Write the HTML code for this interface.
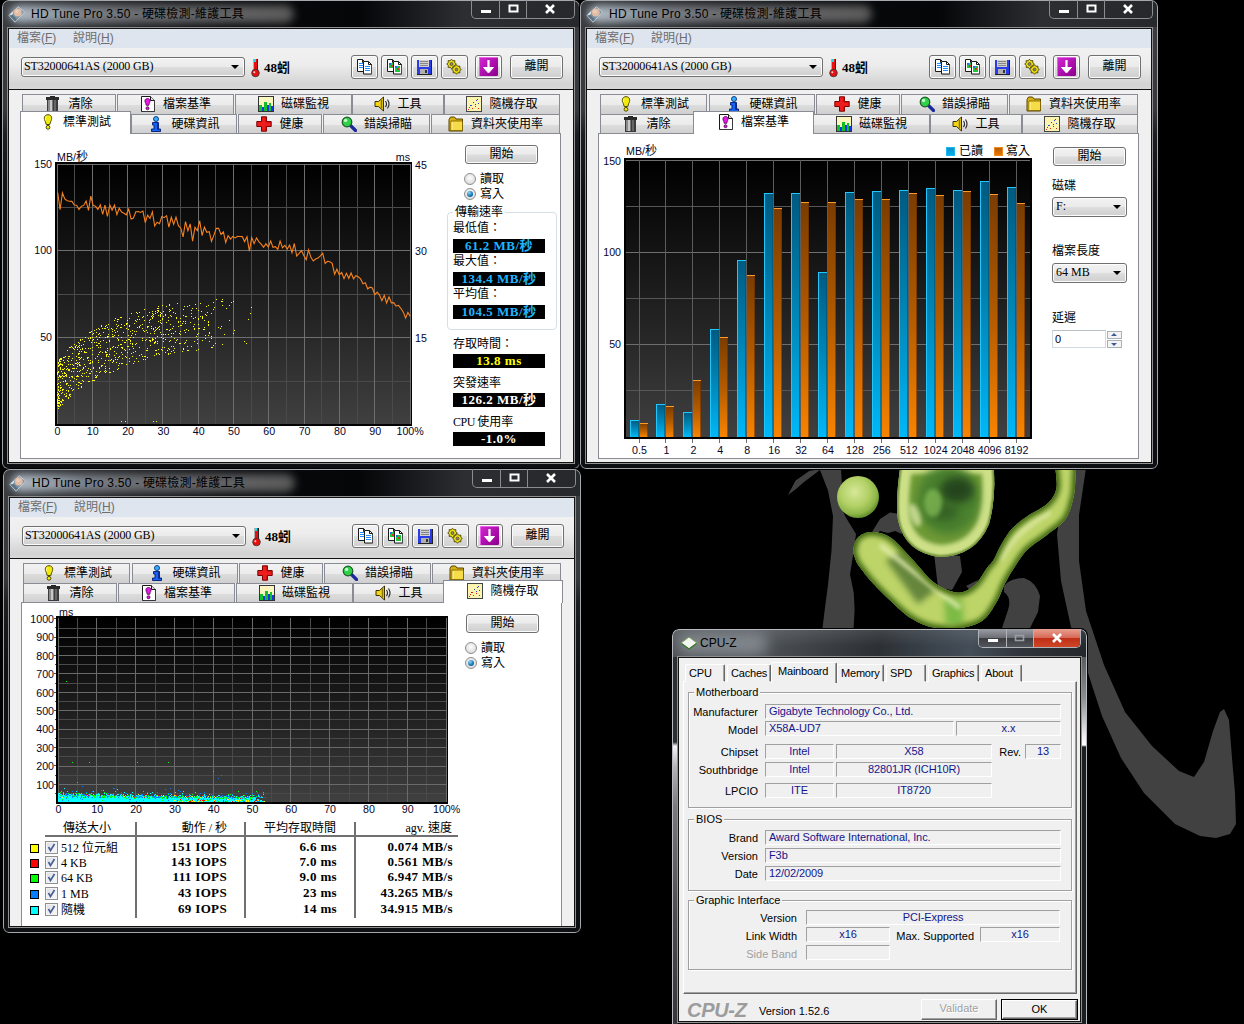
<!DOCTYPE html><html><head><meta charset="utf-8"><title>HD Tune</title><style>
*{box-sizing:border-box;margin:0;padding:0}
html,body{width:1244px;height:1024px;overflow:hidden;background:#000}
body{position:relative;font-family:"Liberation Sans","Noto Sans CJK TC",sans-serif;font-size:12px;color:#000}
.a{position:absolute}
.win{position:absolute;border-radius:7px 7px 6px 6px;background:linear-gradient(#3c3e41 0,#36383b 110px,#1c1d20 135px,#0f1013 200px,#0e0f12 100%);box-shadow:0 0 0 1px #000;overflow:hidden}
.win .edge{position:absolute;left:0;top:0;right:0;bottom:0;border:1px solid #a4a8ac;border-radius:7px 7px 6px 6px}
.tbar{position:absolute;left:1px;right:1px;top:1px;height:26px;background:linear-gradient(90deg,#3a3c40 0,#2a2c2f 8%,#08090b 40%,#050608 62%,#2c2e31 80%,#26282b 100%)}
.glow{position:absolute;left:8px;top:5px;width:284px;height:18px;border-radius:9px;background:linear-gradient(90deg,#b4bec8 0,#a2acb6 10%,#80868e 24%,#6c6e72 45%,#626264 80%,#5a5a5a 100%);filter:blur(4.5px)}
.ttl{position:absolute;left:29px;top:5px;height:18px;line-height:18px;font-size:12px;letter-spacing:.22px;color:#000;white-space:nowrap;font-family:"Liberation Sans","Noto Sans CJK TC",sans-serif}
.cli{position:absolute;left:7px;top:29px;background:#f0f0f0;overflow:hidden}
.cliB{position:absolute;border:1px solid #909090}
.cliB2{position:absolute;border:1px solid #111}
.capb{position:absolute;top:0;height:19px;border:1px solid #8a8c90;border-top:none;border-radius:0 0 5px 5px;overflow:hidden}
.capb i{position:absolute;top:0;bottom:0;width:1px;background:#8a8c90}
.menu{position:absolute;left:0;top:0;right:0;height:19px;background:#dfe5ef;color:#6d6d6d;font-size:12px;line-height:18px;white-space:nowrap}
.menu span{position:absolute;top:0}
.tool{position:absolute;left:0;right:0;top:19px;height:41px;background:linear-gradient(#f1f1f1 0,#ededed 40%,#d3d3d3 90%,#d8d8d8 100%)}
.sep{position:absolute;left:0;right:0;top:60px;height:1px;background:#101010}
.zh{font-family:"Liberation Serif","Noto Sans CJK TC",serif;font-size:12px}
.btn{position:absolute;border:1px solid #707070;border-radius:3px;background:linear-gradient(#f2f2f2 0,#ebebeb 48%,#dddddd 52%,#cfcfcf 100%);box-shadow:inset 0 0 0 1px #fcfcfc;text-align:center;white-space:nowrap}
.combo{position:absolute;border:1px solid #707070;border-radius:3px;background:linear-gradient(#f2f2f2 0,#ebebeb 48%,#dddddd 52%,#cfcfcf 100%);box-shadow:inset 0 0 0 1px #fcfcfc;white-space:nowrap;font-family:"Liberation Serif","Noto Sans CJK TC",serif;font-size:12px}
.combo b{position:absolute;right:5px;top:50%;margin-top:-2px;width:0;height:0;border-left:4px solid transparent;border-right:4px solid transparent;border-top:4px solid #000}
.tab{position:absolute;border:1px solid #898c95;border-bottom:none;background:linear-gradient(#f2f2f2 0,#ebebeb 50%,#dddddd 52%,#cfcfcf 100%);white-space:nowrap;overflow:hidden;display:flex;justify-content:center;align-items:center;padding-bottom:1px}
.tab.sel{background:#fff;z-index:3;padding-bottom:3px}
.tab svg{position:static;flex:none;margin-right:7px}
.tab span{font-family:"Liberation Serif","Noto Sans CJK TC",serif;font-size:12px;line-height:16px}
.page{position:absolute;border:1px solid #898c95;background:#fff}
.lbl{position:absolute;white-space:nowrap;font-family:"Liberation Serif","Noto Sans CJK TC",serif;font-size:12px;line-height:14px}
.val{position:absolute;background:#000;color:#fff;text-align:center;white-space:nowrap;font-family:"Liberation Serif","Noto Sans CJK TC",serif;font-weight:bold;font-size:13px;letter-spacing:.5px;line-height:14px;height:14px;overflow:hidden}
.ax{position:absolute;white-space:nowrap;font-family:"Liberation Sans","Noto Sans CJK TC",sans-serif;font-size:10.67px;line-height:12px;color:#05052a}
.ax b{font-weight:normal;font-size:12px;font-family:"Noto Sans CJK TC",sans-serif}
.radio{position:absolute;width:12px;height:12px;border-radius:50%;border:1px solid #8e8f8f;background:radial-gradient(circle at 50% 40%,#fdfdfd 0,#e3e3e3 60%,#cfcfcf 100%)}
.radio.on:after{content:"";position:absolute;left:2px;top:2px;width:6px;height:6px;border-radius:50%;background:radial-gradient(circle at 35% 30%,#8fd8f8 0,#1c79b8 55%,#0c3f70 100%)}
.chk{position:absolute;width:13px;height:13px;border:1px solid #8e8f8f;background:linear-gradient(135deg,#d8dce2,#f4f4f4 70%);box-shadow:inset 0 0 0 1px #f4f4f4}
.sq{position:absolute;width:9px;height:9px;border:1px solid #000}
/* cpuz */
.cz{font-family:"Liberation Sans",sans-serif;font-size:11px;line-height:13px;white-space:nowrap}
.cz .l{position:absolute;text-align:right;color:#000}
.cz .f{position:absolute;border:1px solid;border-color:#a0a0a0 #fff #fff #a0a0a0;color:#15158c;height:15px;line-height:13px;padding:0 3px;overflow:hidden;letter-spacing:-.1px}
.cz .f.c{text-align:center;padding:0}
.cz .grp{position:absolute;border:1px solid #a0a0a0;box-shadow:1px 1px 0 #fff, inset 1px 1px 0 #fff}
.cz .gl{position:absolute;background:#f0f0f0;padding:0 2px;color:#000}
.cz .ctab{position:absolute;border:1px solid;border-color:#fff #696969 transparent #fff;border-radius:2px 2px 0 0;background:#f0f0f0;box-shadow:inset -1px 0 0 #a0a0a0;padding-left:3px;line-height:17px;color:#000;letter-spacing:-.2px}
.cz .cbtn{position:absolute;border:1px solid;border-color:#fff #696969 #696969 #fff;box-shadow:inset -1px -1px 0 #a0a0a0;background:#f0f0f0;text-align:center;line-height:17px}
</style></head><body><svg class="a" style="left:0;top:0" width="1244" height="1024" viewBox="0 0 1244 1024"><defs>
<radialGradient id="ball" cx=".42" cy=".38" r=".62"><stop offset="0" stop-color="#d6e898"/><stop offset=".55" stop-color="#b2d066"/><stop offset=".85" stop-color="#8eb648"/><stop offset="1" stop-color="#64902e"/></radialGradient>
<filter id="b4" x="-50%" y="-50%" width="200%" height="200%"><feGaussianBlur stdDeviation="4"/></filter>
<filter id="b3" x="-50%" y="-50%" width="200%" height="200%"><feGaussianBlur stdDeviation="3"/></filter>
<filter id="b2" x="-50%" y="-50%" width="200%" height="200%"><feGaussianBlur stdDeviation="2.2"/></filter>
<filter id="b1" x="-50%" y="-50%" width="200%" height="200%"><feGaussianBlur stdDeviation="1"/></filter>
<clipPath id="swc"><path d="M853.3 550.0L853.2 551.2L853.3 552.3L853.4 553.3L853.7 554.2L854.0 555.2L854.3 556.1L854.6 557.0L855.0 558.0L855.3 558.9L855.6 559.8L855.9 560.6L856.2 561.4L856.6 562.3L857.2 563.3L857.9 564.5L858.9 565.9L860.1 567.6L861.6 569.5L863.2 571.6L864.9 573.9L866.8 576.2L868.7 578.5L870.7 580.8L872.6 583.0L874.6 585.1L876.6 587.3L878.8 589.5L880.9 591.6L883.1 593.7L885.3 595.9L887.5 598.0L889.7 600.0L891.8 602.0L894.0 604.1L896.1 606.2L898.3 608.2L900.4 610.1L902.5 612.0L904.7 613.8L906.8 615.4L908.9 616.9L911.1 618.3L913.2 619.6L915.4 620.8L917.5 622.0L919.6 623.0L921.7 623.9L923.8 624.8L925.9 625.6L927.9 626.2L929.9 626.7L931.9 627.2L933.9 627.6L935.9 627.9L938.0 628.2L940.0 628.5L942.0 628.8L943.9 629.0L945.8 629.3L947.7 629.5L949.6 629.6L951.7 629.5L954.0 629.4L956.5 629.0L959.3 628.5L962.5 627.9L965.9 627.1L969.4 626.2L972.8 625.2L976.2 624.0L979.3 622.6L982.0 621.0L984.4 619.1L986.6 617.0L988.6 614.6L990.4 612.0L992.2 609.4L993.7 606.8L995.3 604.2L996.7 601.8L998.0 599.5L999.1 597.2L1000.1 594.9L1001.0 592.7L1001.9 590.5L1002.8 588.3L1003.7 586.1L1004.7 584.0L1005.8 581.9L1006.8 579.9L1007.9 578.0L1009.0 576.0L1010.2 574.1L1011.4 572.1L1012.7 570.1L1014.0 568.0L1015.4 565.8L1016.8 563.6L1018.3 561.3L1019.8 559.0L1021.4 556.7L1023.1 554.4L1025.0 552.1L1027.0 550.0L1029.2 547.9L1031.7 545.9L1034.2 544.0L1036.9 542.1L1039.7 540.2L1042.4 538.3L1045.0 536.4L1047.5 534.5L1049.9 532.6L1052.4 530.7L1054.9 528.9L1057.3 527.1L1059.6 525.2L1061.8 523.2L1063.8 521.2L1065.5 519.0L1067.0 516.7L1068.3 514.1L1069.4 511.5L1070.3 508.9L1071.2 506.2L1071.9 503.5L1072.6 500.9L1073.2 498.4L1073.8 496.0L1074.2 493.7L1074.5 491.5L1074.8 489.3L1075.0 487.1L1075.1 484.9L1075.2 482.7L1075.3 480.4L1075.4 478.0L1075.6 475.4L1075.8 472.7L1075.9 470.1L1075.8 467.6L1075.5 465.3L1075.0 463.4L1074.0 462.0L1072.5 460.9L1070.4 460.1L1067.9 459.5L1065.2 459.2L1062.5 459.3L1060.0 459.7L1058.0 460.6L1056.5 462.0L1055.7 464.1L1055.5 466.9L1055.6 470.3L1056.0 474.0L1056.4 477.9L1056.7 481.6L1056.8 485.1L1056.5 488.0L1055.9 490.5L1055.2 492.7L1054.3 494.7L1053.3 496.6L1052.1 498.4L1050.8 500.1L1049.2 501.9L1047.5 503.6L1045.5 505.3L1043.1 507.0L1040.4 508.6L1037.7 510.2L1034.8 511.7L1032.0 513.3L1029.4 514.8L1027.0 516.4L1024.8 518.0L1022.7 519.6L1020.6 521.1L1018.6 522.7L1016.7 524.3L1014.9 525.9L1013.2 527.6L1011.5 529.3L1009.9 531.1L1008.5 533.0L1007.1 534.9L1005.9 536.9L1004.6 538.8L1003.5 540.8L1002.3 542.8L1001.2 544.7L1000.1 546.7L999.1 548.7L998.1 550.8L997.1 552.8L996.2 554.8L995.3 556.7L994.4 558.4L993.5 560.0L992.7 561.3L991.9 562.3L991.2 563.2L990.5 564.0L989.7 564.7L988.9 565.6L988.0 566.7L987.0 568.0L985.8 569.7L984.6 571.6L983.2 573.8L981.8 576.0L980.3 578.2L978.8 580.4L977.3 582.3L975.8 584.0L974.3 585.4L972.7 586.8L971.1 588.0L969.5 589.1L967.9 590.0L966.3 590.8L964.6 591.5L963.0 592.0L961.4 592.4L959.9 592.6L958.4 592.7L956.8 592.6L955.2 592.4L953.6 592.1L951.9 591.6L950.0 591.0L948.0 590.3L945.9 589.4L943.7 588.4L941.4 587.2L939.0 586.0L936.7 584.5L934.3 582.8L932.0 581.0L929.7 578.9L927.3 576.5L925.0 573.9L922.6 571.1L920.2 568.3L917.8 565.5L915.4 562.7L913.0 560.0L910.5 557.3L907.9 554.5L905.3 551.7L902.7 548.9L900.2 546.2L897.7 543.7L895.4 541.5L893.2 539.6L891.3 538.1L889.5 536.9L887.9 535.9L886.3 535.2L884.8 534.6L883.4 534.1L881.9 533.6L880.3 533.2L878.7 532.8L877.0 532.4L875.4 532.2L873.7 532.0L872.1 532.0L870.5 532.0L869.0 532.1L867.5 532.4L866.0 532.8L864.6 533.3L863.2 533.9L861.8 534.6L860.5 535.4L859.3 536.3L858.2 537.2L857.2 538.3L856.4 539.5L855.6 540.9L855.0 542.4L854.5 544.0L854.1 545.6L853.7 547.2L853.5 548.7Z"/></clipPath>
<clipPath id="blc"><path d="M901 462Q895 500 898 520Q905 553 940 557Q976 556 989 524Q997 495 993 462Z"/></clipPath>
</defs><path d="M819.600 469L828 490.600L833 516L831.500 550.500L828 584.700L824.700 610L821 640L853 640L854.600 610L853.800 593L850 574.400L853.800 550.500L856 534L845 516L838.400 499L841.800 482L841 469Z" fill="#414141"/><path d="M788 495L795.600 480.400L809.300 471L821 469L816 473L804 482L796 489Z" fill="#414141"/><path d="M872 532L880 519L890 512.500L900 514L902 534L895 531L888 533L880 531L875 535Z" fill="#414141"/><path d="M934 553L960 556L962 572L952 590L938 588Z" fill="#414141"/><path d="M966 586L978 580L972 592Z" fill="#414141"/><path d="M1004 586Q1010 578 1024 578Q1036 582 1040 596L1038 612L1030 628L1002 628L1008 610Q1012 598 1004 592Z" fill="#414141"/><path d="M1086 468L1079 515L1079 561L1086 611L1104 665L1125 712L1152 746L1179 771L1194 777L1204 762L1213 731L1220 712L1224 709L1229 720L1232 758L1235 793L1236 824L1230 834L1216 838L1200 836L1175 824L1144 793L1121 758L1102 716L1088 673L1071 627L1061 581L1057 534L1062 500L1069 468Z" fill="#414141"/><path d="M853.3 550.0L853.2 551.2L853.3 552.3L853.4 553.3L853.7 554.2L854.0 555.2L854.3 556.1L854.6 557.0L855.0 558.0L855.3 558.9L855.6 559.8L855.9 560.6L856.2 561.4L856.6 562.3L857.2 563.3L857.9 564.5L858.9 565.9L860.1 567.6L861.6 569.5L863.2 571.6L864.9 573.9L866.8 576.2L868.7 578.5L870.7 580.8L872.6 583.0L874.6 585.1L876.6 587.3L878.8 589.5L880.9 591.6L883.1 593.7L885.3 595.9L887.5 598.0L889.7 600.0L891.8 602.0L894.0 604.1L896.1 606.2L898.3 608.2L900.4 610.1L902.5 612.0L904.7 613.8L906.8 615.4L908.9 616.9L911.1 618.3L913.2 619.6L915.4 620.8L917.5 622.0L919.6 623.0L921.7 623.9L923.8 624.8L925.9 625.6L927.9 626.2L929.9 626.7L931.9 627.2L933.9 627.6L935.9 627.9L938.0 628.2L940.0 628.5L942.0 628.8L943.9 629.0L945.8 629.3L947.7 629.5L949.6 629.6L951.7 629.5L954.0 629.4L956.5 629.0L959.3 628.5L962.5 627.9L965.9 627.1L969.4 626.2L972.8 625.2L976.2 624.0L979.3 622.6L982.0 621.0L984.4 619.1L986.6 617.0L988.6 614.6L990.4 612.0L992.2 609.4L993.7 606.8L995.3 604.2L996.7 601.8L998.0 599.5L999.1 597.2L1000.1 594.9L1001.0 592.7L1001.9 590.5L1002.8 588.3L1003.7 586.1L1004.7 584.0L1005.8 581.9L1006.8 579.9L1007.9 578.0L1009.0 576.0L1010.2 574.1L1011.4 572.1L1012.7 570.1L1014.0 568.0L1015.4 565.8L1016.8 563.6L1018.3 561.3L1019.8 559.0L1021.4 556.7L1023.1 554.4L1025.0 552.1L1027.0 550.0L1029.2 547.9L1031.7 545.9L1034.2 544.0L1036.9 542.1L1039.7 540.2L1042.4 538.3L1045.0 536.4L1047.5 534.5L1049.9 532.6L1052.4 530.7L1054.9 528.9L1057.3 527.1L1059.6 525.2L1061.8 523.2L1063.8 521.2L1065.5 519.0L1067.0 516.7L1068.3 514.1L1069.4 511.5L1070.3 508.9L1071.2 506.2L1071.9 503.5L1072.6 500.9L1073.2 498.4L1073.8 496.0L1074.2 493.7L1074.5 491.5L1074.8 489.3L1075.0 487.1L1075.1 484.9L1075.2 482.7L1075.3 480.4L1075.4 478.0L1075.6 475.4L1075.8 472.7L1075.9 470.1L1075.8 467.6L1075.5 465.3L1075.0 463.4L1074.0 462.0L1072.5 460.9L1070.4 460.1L1067.9 459.5L1065.2 459.2L1062.5 459.3L1060.0 459.7L1058.0 460.6L1056.5 462.0L1055.7 464.1L1055.5 466.9L1055.6 470.3L1056.0 474.0L1056.4 477.9L1056.7 481.6L1056.8 485.1L1056.5 488.0L1055.9 490.5L1055.2 492.7L1054.3 494.7L1053.3 496.6L1052.1 498.4L1050.8 500.1L1049.2 501.9L1047.5 503.6L1045.5 505.3L1043.1 507.0L1040.4 508.6L1037.7 510.2L1034.8 511.7L1032.0 513.3L1029.4 514.8L1027.0 516.4L1024.8 518.0L1022.7 519.6L1020.6 521.1L1018.6 522.7L1016.7 524.3L1014.9 525.9L1013.2 527.6L1011.5 529.3L1009.9 531.1L1008.5 533.0L1007.1 534.9L1005.9 536.9L1004.6 538.8L1003.5 540.8L1002.3 542.8L1001.2 544.7L1000.1 546.7L999.1 548.7L998.1 550.8L997.1 552.8L996.2 554.8L995.3 556.7L994.4 558.4L993.5 560.0L992.7 561.3L991.9 562.3L991.2 563.2L990.5 564.0L989.7 564.7L988.9 565.6L988.0 566.7L987.0 568.0L985.8 569.7L984.6 571.6L983.2 573.8L981.8 576.0L980.3 578.2L978.8 580.4L977.3 582.3L975.8 584.0L974.3 585.4L972.7 586.8L971.1 588.0L969.5 589.1L967.9 590.0L966.3 590.8L964.6 591.5L963.0 592.0L961.4 592.4L959.9 592.6L958.4 592.7L956.8 592.6L955.2 592.4L953.6 592.1L951.9 591.6L950.0 591.0L948.0 590.3L945.9 589.4L943.7 588.4L941.4 587.2L939.0 586.0L936.7 584.5L934.3 582.8L932.0 581.0L929.7 578.9L927.3 576.5L925.0 573.9L922.6 571.1L920.2 568.3L917.8 565.5L915.4 562.7L913.0 560.0L910.5 557.3L907.9 554.5L905.3 551.7L902.7 548.9L900.2 546.2L897.7 543.7L895.4 541.5L893.2 539.6L891.3 538.1L889.5 536.9L887.9 535.9L886.3 535.2L884.8 534.6L883.4 534.1L881.9 533.6L880.3 533.2L878.7 532.8L877.0 532.4L875.4 532.2L873.7 532.0L872.1 532.0L870.5 532.0L869.0 532.1L867.5 532.4L866.0 532.8L864.6 533.3L863.2 533.9L861.8 534.6L860.5 535.4L859.3 536.3L858.2 537.2L857.2 538.3L856.4 539.5L855.6 540.9L855.0 542.4L854.5 544.0L854.1 545.6L853.7 547.2L853.5 548.7Z" fill="#bdd468"/><g clip-path="url(#swc)"><path d="M886 560L904 550L936 590L918 604Z" fill="#5c7e38" filter="url(#b3)" opacity=".9"/><path d="M944 598L962 598L964 626L946 626Z" fill="#6cb43c" filter="url(#b3)" opacity=".8"/><path d="M880 545L960 608" stroke="#e6efb4" stroke-width="5" fill="none" filter="url(#b2)" opacity=".8"/><path d="M1000 560Q1015 530 1050 512" stroke="#dfeaa6" stroke-width="6" fill="none" filter="url(#b2)" opacity=".8"/><path d="M853.3 550.0L853.2 551.2L853.3 552.3L853.4 553.3L853.7 554.2L854.0 555.2L854.3 556.1L854.6 557.0L855.0 558.0L855.3 558.9L855.6 559.8L855.9 560.6L856.2 561.4L856.6 562.3L857.2 563.3L857.9 564.5L858.9 565.9L860.1 567.6L861.6 569.5L863.2 571.6L864.9 573.9L866.8 576.2L868.7 578.5L870.7 580.8L872.6 583.0L874.6 585.1L876.6 587.3L878.8 589.5L880.9 591.6L883.1 593.7L885.3 595.9L887.5 598.0L889.7 600.0L891.8 602.0L894.0 604.1L896.1 606.2L898.3 608.2L900.4 610.1L902.5 612.0L904.7 613.8L906.8 615.4L908.9 616.9L911.1 618.3L913.2 619.6L915.4 620.8L917.5 622.0L919.6 623.0L921.7 623.9L923.8 624.8L925.9 625.6L927.9 626.2L929.9 626.7L931.9 627.2L933.9 627.6L935.9 627.9L938.0 628.2L940.0 628.5L942.0 628.8L943.9 629.0L945.8 629.3L947.7 629.5L949.6 629.6L951.7 629.5L954.0 629.4L956.5 629.0L959.3 628.5L962.5 627.9L965.9 627.1L969.4 626.2L972.8 625.2L976.2 624.0L979.3 622.6L982.0 621.0L984.4 619.1L986.6 617.0L988.6 614.6L990.4 612.0L992.2 609.4L993.7 606.8L995.3 604.2L996.7 601.8L998.0 599.5L999.1 597.2L1000.1 594.9L1001.0 592.7L1001.9 590.5L1002.8 588.3L1003.7 586.1L1004.7 584.0L1005.8 581.9L1006.8 579.9L1007.9 578.0L1009.0 576.0L1010.2 574.1L1011.4 572.1L1012.7 570.1L1014.0 568.0L1015.4 565.8L1016.8 563.6L1018.3 561.3L1019.8 559.0L1021.4 556.7L1023.1 554.4L1025.0 552.1L1027.0 550.0L1029.2 547.9L1031.7 545.9L1034.2 544.0L1036.9 542.1L1039.7 540.2L1042.4 538.3L1045.0 536.4L1047.5 534.5L1049.9 532.6L1052.4 530.7L1054.9 528.9L1057.3 527.1L1059.6 525.2L1061.8 523.2L1063.8 521.2L1065.5 519.0L1067.0 516.7L1068.3 514.1L1069.4 511.5L1070.3 508.9L1071.2 506.2L1071.9 503.5L1072.6 500.9L1073.2 498.4L1073.8 496.0L1074.2 493.7L1074.5 491.5L1074.8 489.3L1075.0 487.1L1075.1 484.9L1075.2 482.7L1075.3 480.4L1075.4 478.0L1075.6 475.4L1075.8 472.7L1075.9 470.1L1075.8 467.6L1075.5 465.3L1075.0 463.4L1074.0 462.0L1072.5 460.9L1070.4 460.1L1067.9 459.5L1065.2 459.2L1062.5 459.3L1060.0 459.7L1058.0 460.6L1056.5 462.0L1055.7 464.1L1055.5 466.9L1055.6 470.3L1056.0 474.0L1056.4 477.9L1056.7 481.6L1056.8 485.1L1056.5 488.0L1055.9 490.5L1055.2 492.7L1054.3 494.7L1053.3 496.6L1052.1 498.4L1050.8 500.1L1049.2 501.9L1047.5 503.6L1045.5 505.3L1043.1 507.0L1040.4 508.6L1037.7 510.2L1034.8 511.7L1032.0 513.3L1029.4 514.8L1027.0 516.4L1024.8 518.0L1022.7 519.6L1020.6 521.1L1018.6 522.7L1016.7 524.3L1014.9 525.9L1013.2 527.6L1011.5 529.3L1009.9 531.1L1008.5 533.0L1007.1 534.9L1005.9 536.9L1004.6 538.8L1003.5 540.8L1002.3 542.8L1001.2 544.7L1000.1 546.7L999.1 548.7L998.1 550.8L997.1 552.8L996.2 554.8L995.3 556.7L994.4 558.4L993.5 560.0L992.7 561.3L991.9 562.3L991.2 563.2L990.5 564.0L989.7 564.7L988.9 565.6L988.0 566.7L987.0 568.0L985.8 569.7L984.6 571.6L983.2 573.8L981.8 576.0L980.3 578.2L978.8 580.4L977.3 582.3L975.8 584.0L974.3 585.4L972.7 586.8L971.1 588.0L969.5 589.1L967.9 590.0L966.3 590.8L964.6 591.5L963.0 592.0L961.4 592.4L959.9 592.6L958.4 592.7L956.8 592.6L955.2 592.4L953.6 592.1L951.9 591.6L950.0 591.0L948.0 590.3L945.9 589.4L943.7 588.4L941.4 587.2L939.0 586.0L936.7 584.5L934.3 582.8L932.0 581.0L929.7 578.9L927.3 576.5L925.0 573.9L922.6 571.1L920.2 568.3L917.8 565.5L915.4 562.7L913.0 560.0L910.5 557.3L907.9 554.5L905.3 551.7L902.7 548.9L900.2 546.2L897.7 543.7L895.4 541.5L893.2 539.6L891.3 538.1L889.5 536.9L887.9 535.9L886.3 535.2L884.8 534.6L883.4 534.1L881.9 533.6L880.3 533.2L878.7 532.8L877.0 532.4L875.4 532.2L873.7 532.0L872.1 532.0L870.5 532.0L869.0 532.1L867.5 532.4L866.0 532.8L864.6 533.3L863.2 533.9L861.8 534.6L860.5 535.4L859.3 536.3L858.2 537.2L857.2 538.3L856.4 539.5L855.6 540.9L855.0 542.4L854.5 544.0L854.1 545.6L853.7 547.2L853.5 548.7Z" fill="none" stroke="#5f8426" stroke-width="9" filter="url(#b2)"/><path d="M853.3 550.0L853.2 551.2L853.3 552.3L853.4 553.3L853.7 554.2L854.0 555.2L854.3 556.1L854.6 557.0L855.0 558.0L855.3 558.9L855.6 559.8L855.9 560.6L856.2 561.4L856.6 562.3L857.2 563.3L857.9 564.5L858.9 565.9L860.1 567.6L861.6 569.5L863.2 571.6L864.9 573.9L866.8 576.2L868.7 578.5L870.7 580.8L872.6 583.0L874.6 585.1L876.6 587.3L878.8 589.5L880.9 591.6L883.1 593.7L885.3 595.9L887.5 598.0L889.7 600.0L891.8 602.0L894.0 604.1L896.1 606.2L898.3 608.2L900.4 610.1L902.5 612.0L904.7 613.8L906.8 615.4L908.9 616.9L911.1 618.3L913.2 619.6L915.4 620.8L917.5 622.0L919.6 623.0L921.7 623.9L923.8 624.8L925.9 625.6L927.9 626.2L929.9 626.7L931.9 627.2L933.9 627.6L935.9 627.9L938.0 628.2L940.0 628.5L942.0 628.8L943.9 629.0L945.8 629.3L947.7 629.5L949.6 629.6L951.7 629.5L954.0 629.4L956.5 629.0L959.3 628.5L962.5 627.9L965.9 627.1L969.4 626.2L972.8 625.2L976.2 624.0L979.3 622.6L982.0 621.0L984.4 619.1L986.6 617.0L988.6 614.6L990.4 612.0L992.2 609.4L993.7 606.8L995.3 604.2L996.7 601.8L998.0 599.5L999.1 597.2L1000.1 594.9L1001.0 592.7L1001.9 590.5L1002.8 588.3L1003.7 586.1L1004.7 584.0L1005.8 581.9L1006.8 579.9L1007.9 578.0L1009.0 576.0L1010.2 574.1L1011.4 572.1L1012.7 570.1L1014.0 568.0L1015.4 565.8L1016.8 563.6L1018.3 561.3L1019.8 559.0L1021.4 556.7L1023.1 554.4L1025.0 552.1L1027.0 550.0L1029.2 547.9L1031.7 545.9L1034.2 544.0L1036.9 542.1L1039.7 540.2L1042.4 538.3L1045.0 536.4L1047.5 534.5L1049.9 532.6L1052.4 530.7L1054.9 528.9L1057.3 527.1L1059.6 525.2L1061.8 523.2L1063.8 521.2L1065.5 519.0L1067.0 516.7L1068.3 514.1L1069.4 511.5L1070.3 508.9L1071.2 506.2L1071.9 503.5L1072.6 500.9L1073.2 498.4L1073.8 496.0L1074.2 493.7L1074.5 491.5L1074.8 489.3L1075.0 487.1L1075.1 484.9L1075.2 482.7L1075.3 480.4L1075.4 478.0L1075.6 475.4L1075.8 472.7L1075.9 470.1L1075.8 467.6L1075.5 465.3L1075.0 463.4L1074.0 462.0L1072.5 460.9L1070.4 460.1L1067.9 459.5L1065.2 459.2L1062.5 459.3L1060.0 459.7L1058.0 460.6L1056.5 462.0L1055.7 464.1L1055.5 466.9L1055.6 470.3L1056.0 474.0L1056.4 477.9L1056.7 481.6L1056.8 485.1L1056.5 488.0L1055.9 490.5L1055.2 492.7L1054.3 494.7L1053.3 496.6L1052.1 498.4L1050.8 500.1L1049.2 501.9L1047.5 503.6L1045.5 505.3L1043.1 507.0L1040.4 508.6L1037.7 510.2L1034.8 511.7L1032.0 513.3L1029.4 514.8L1027.0 516.4L1024.8 518.0L1022.7 519.6L1020.6 521.1L1018.6 522.7L1016.7 524.3L1014.9 525.9L1013.2 527.6L1011.5 529.3L1009.9 531.1L1008.5 533.0L1007.1 534.9L1005.9 536.9L1004.6 538.8L1003.5 540.8L1002.3 542.8L1001.2 544.7L1000.1 546.7L999.1 548.7L998.1 550.8L997.1 552.8L996.2 554.8L995.3 556.7L994.4 558.4L993.5 560.0L992.7 561.3L991.9 562.3L991.2 563.2L990.5 564.0L989.7 564.7L988.9 565.6L988.0 566.7L987.0 568.0L985.8 569.7L984.6 571.6L983.2 573.8L981.8 576.0L980.3 578.2L978.8 580.4L977.3 582.3L975.8 584.0L974.3 585.4L972.7 586.8L971.1 588.0L969.5 589.1L967.9 590.0L966.3 590.8L964.6 591.5L963.0 592.0L961.4 592.4L959.9 592.6L958.4 592.7L956.8 592.6L955.2 592.4L953.6 592.1L951.9 591.6L950.0 591.0L948.0 590.3L945.9 589.4L943.7 588.4L941.4 587.2L939.0 586.0L936.7 584.5L934.3 582.8L932.0 581.0L929.7 578.9L927.3 576.5L925.0 573.9L922.6 571.1L920.2 568.3L917.8 565.5L915.4 562.7L913.0 560.0L910.5 557.3L907.9 554.5L905.3 551.7L902.7 548.9L900.2 546.2L897.7 543.7L895.4 541.5L893.2 539.6L891.3 538.1L889.5 536.9L887.9 535.9L886.3 535.2L884.8 534.6L883.4 534.1L881.9 533.6L880.3 533.2L878.7 532.8L877.0 532.4L875.4 532.2L873.7 532.0L872.1 532.0L870.5 532.0L869.0 532.1L867.5 532.4L866.0 532.8L864.6 533.3L863.2 533.9L861.8 534.6L860.5 535.4L859.3 536.3L858.2 537.2L857.2 538.3L856.4 539.5L855.6 540.9L855.0 542.4L854.5 544.0L854.1 545.6L853.7 547.2L853.5 548.7Z" fill="none" stroke="#4a6a1c" stroke-width="2.500" filter="url(#b1)"/></g><path d="M901 462Q895 500 898 520Q905 553 940 557Q976 556 989 524Q997 495 993 462Z" fill="#6f9a36"/><g clip-path="url(#blc)"><path d="M901 462Q895 500 898 520Q905 553 940 557Q976 556 989 524Q997 495 993 462Z" fill="none" stroke="#cde088" stroke-width="24" filter="url(#b2)"/><ellipse cx="948" cy="500" rx="31" ry="35" fill="#48802f" filter="url(#b4)"/><ellipse cx="957" cy="490" rx="17" ry="13" fill="#24401c" filter="url(#b4)" opacity=".9"/><ellipse cx="944" cy="512" rx="14" ry="9" fill="#2f5524" filter="url(#b4)" opacity=".7"/><ellipse cx="933" cy="503" rx="9" ry="14" fill="#7fb552" filter="url(#b2)" opacity=".8"/><ellipse cx="915" cy="515" rx="5" ry="12" fill="#e4efb4" filter="url(#b2)" opacity=".7" transform="rotate(-20 915 515)"/><path d="M901 462Q895 500 898 520Q905 553 940 557Q976 556 989 524Q997 495 993 462Z" fill="none" stroke="#5a7f28" stroke-width="3" filter="url(#b1)"/></g><circle cx="858" cy="497" r="21" fill="url(#ball)"/></svg><div class="win" style="left:2px;top:0px;width:578px;height:469px"><div class="tbar"></div><div class="glow"></div><div class="edge"></div><svg class="a" style="left:6px;top:6px" width="18" height="18" viewBox="0 0 18 18"><path d="M10.300 .8L16.600 6L7 16.200L.9 9.400Z" fill="#7f95a5" stroke="#c4d2dc" stroke-width=".9" stroke-linejoin="round"/><path d="M1.500 9.800L7 15.600L9 13.500L3.500 8Z" fill="#5a7282"/><path d="M2.500 9L5 6.500" stroke="#e8f0f4" stroke-width="1.300"/><circle cx="9.800" cy="6.500" r="3.900" fill="#e2bca4"/><circle cx="9" cy="5.500" r="1.800" fill="#eccdb8"/></svg><div class="ttl">HD Tune Pro 3.50 - 硬碟檢測-維護工具</div><div class="capb" style="left:469px;width:104px"><i style="left:27px"></i><i style="left:54px"></i><svg class="a" style="left:0;top:0" width="104" height="19"><rect x="9" y="10" width="10" height="3" fill="#fff"/><rect x="37.500" y="5.500" width="8" height="6" fill="none" stroke="#fff" stroke-width="2"/><path d="M74 5l8 8M82 5l-8 8" stroke="#fff" stroke-width="2.600"/></svg></div><div class="cliB" style="left:5px;top:27px;width:568px;height:437px"></div><div class="cliB2" style="left:6px;top:28px;width:566px;height:435px"></div><div class="cli" style="width:564px;height:433px"><div class="menu"><span style="left:8px">檔案(<u>F</u>)</span><span style="left:64px">說明(<u>H</u>)</span></div><div class="tool"></div><div class="sep"></div><div class="combo" style="left:12px;top:28px;width:224px;height:20px;line-height:17px;padding-left:2px;font-size:12px;letter-spacing:-.12px">ST32000641AS (2000 GB)<b></b></div><svg class="a" style="left:241px;top:29px" width="11" height="20" viewBox="0 0 11 20"><g shape-rendering="crispEdges"><rect x="3" y="1" width="5" height="14" fill="#222"/><rect x="3" y="1" width="1" height="13" fill="#b0b0b0"/><rect x="4" y="1" width="3" height="13" fill="#e81010"/><rect x="4" y="1" width="2" height="3" fill="#20d8e8"/></g><circle cx="5.500" cy="15" r="3.800" fill="#e81010" stroke="#333" stroke-width=".8"/><circle cx="4.300" cy="14.200" r="1" fill="#ffd0d0"/></svg><div class="lbl" style="left:255px;top:31px;font-weight:bold;font-size:13px;line-height:16px">48蚓</div><div class="btn" style="left:342px;top:26px;width:27px;height:24px"><svg class="a" style="left:3px;top:2px" width="18" height="18" viewBox="0 0 18 18"><path d="M2.500 1.500h5l3 3v9h-8z" fill="#fff" stroke="#1a1a1a" stroke-width="1"/><path d="M7.500 1.500v3h3" fill="none" stroke="#1a1a1a" stroke-width="1"/><path d="M8.500 3.500h5l3 3v9.500h-8z" fill="#fff" stroke="#1a1a1a" stroke-width="1"/><path d="M13.500 3.500v3h3" fill="none" stroke="#1a1a1a" stroke-width="1"/><path d="M16.500 7v9.500h-7.500" fill="none" stroke="#666" stroke-width="1" opacity=".6"/><g shape-rendering="crispEdges" fill="#1e8cff"><rect x="4" y="5" width="4" height="1"/><rect x="4" y="7" width="4" height="1"/><rect x="4" y="9" width="4" height="1"/><rect x="10" y="8" width="5" height="1"/><rect x="10" y="10" width="5" height="1"/><rect x="10" y="12" width="5" height="1"/></g></svg></div><div class="btn" style="left:372px;top:26px;width:27px;height:24px"><svg class="a" style="left:3px;top:2px" width="18" height="18" viewBox="0 0 18 18"><path d="M2.500 1.500h5l3 3v9h-8z" fill="#fff" stroke="#1a1a1a" stroke-width="1"/><path d="M7.500 1.500v3h3" fill="none" stroke="#1a1a1a" stroke-width="1"/><path d="M8.500 3.500h5l3 3v9.500h-8z" fill="#fff" stroke="#1a1a1a" stroke-width="1"/><path d="M13.500 3.500v3h3" fill="none" stroke="#1a1a1a" stroke-width="1"/><path d="M16.500 7v9.500h-7.500" fill="none" stroke="#666" stroke-width="1" opacity=".6"/><g shape-rendering="crispEdges"><rect x="4" y="5" width="4" height="5" fill="#18c838"/><rect x="4" y="5" width="2" height="2" fill="#2a6cf0"/><rect x="6" y="7" width="2" height="2" fill="#e03818"/><rect x="10" y="8" width="5" height="6" fill="#18c838"/><rect x="10" y="8" width="2" height="2" fill="#2a6cf0"/><rect x="12" y="10" width="2" height="2" fill="#e03818"/></g></svg></div><div class="btn" style="left:402px;top:26px;width:27px;height:24px"><svg class="a" style="left:3px;top:2px" width="18" height="18" viewBox="0 0 18 18"><g shape-rendering="crispEdges"><rect x="2" y="2" width="15" height="15" fill="#222"/><rect x="2" y="2" width="14" height="14" fill="#2a3ce8"/><rect x="4" y="2" width="10" height="7" fill="#d0d0d0"/><rect x="5" y="3" width="8" height="1" fill="#888"/><rect x="5" y="5" width="8" height="1" fill="#888"/><rect x="5" y="7" width="8" height="1" fill="#888"/><rect x="5" y="11" width="8" height="5" fill="#b0b0b0"/><rect x="10" y="12" width="2" height="3" fill="#333"/></g></svg></div><div class="btn" style="left:432px;top:26px;width:27px;height:24px"><svg class="a" style="left:3px;top:2px" width="18" height="18" viewBox="0 0 18 18"><path d="M11.3 6.0L9.7 7.3L9.9 9.4L7.8 9.2L6.5 10.8L5.2 9.2L3.1 9.4L3.3 7.3L1.7 6.0L3.3 4.7L3.1 2.6L5.2 2.8L6.5 1.2L7.8 2.8L9.9 2.6L9.7 4.7Z" fill="#f0e010" stroke="#4a4400" stroke-width=".9"/><circle cx="6.5" cy="6" r="1.5" fill="#8a8a70" stroke="#333" stroke-width=".6"/><path d="M16.3 11.5L14.7 12.8L14.9 14.9L12.8 14.7L11.5 16.3L10.2 14.7L8.1 14.9L8.3 12.8L6.7 11.5L8.3 10.2L8.1 8.1L10.2 8.3L11.5 6.7L12.8 8.3L14.9 8.1L14.7 10.2Z" fill="#f0e010" stroke="#4a4400" stroke-width=".9"/><circle cx="11.5" cy="11.5" r="1.5" fill="#8a8a70" stroke="#333" stroke-width=".6"/></svg></div><div class="btn" style="left:466px;top:26px;width:27px;height:24px"><svg class="a" style="left:3px;top:1px" width="19" height="19" viewBox="0 0 19 19"><defs><linearGradient id="mg" x1="0" y1="0" x2="1" y2="1"><stop offset="0" stop-color="#d428d4"/><stop offset=".5" stop-color="#b010b0"/><stop offset="1" stop-color="#8a008a"/></linearGradient></defs><rect x="0" y="0" width="19" height="19" rx="1.500" fill="url(#mg)"/><path d="M.5 18.500v-18h18" fill="none" stroke="#e860e8" stroke-width="1"/><path d="M9.500 3v11" fill="none" stroke="#fff" stroke-width="2.200"/><path d="M4.500 10.500l5 5.500 5-5.500z" fill="#fff" stroke="#fff" stroke-width="1" stroke-linejoin="miter"/></svg></div><div class="btn zh" style="left:501px;top:26px;width:53px;height:24px;line-height:21px">離開</div><div class="tab" style="left:13px;top:65px;width:94px;height:20px"><svg class="a" style="left:0px;top:0px" width="16" height="16" viewBox="0 0 16 16"><g shape-rendering="crispEdges"><rect x="5" y="0" width="5" height="2" fill="#222"/><rect x="1" y="1" width="13" height="3" fill="#2a2a2a"/><rect x="2" y="4" width="11" height="12" fill="#3c3c3c"/><rect x="3" y="4" width="2" height="11" fill="#8a8a8a"/><rect x="5" y="4" width="2" height="11" fill="#c8c8c8"/><rect x="7" y="4" width="1" height="11" fill="#777"/><rect x="9" y="4" width="2" height="11" fill="#666"/></g></svg><span>清除</span></div><div class="tab" style="left:108px;top:65px;width:117px;height:20px"><svg class="a" style="left:0px;top:0px" width="16" height="16" viewBox="0 0 16 16"><path d="M1.500 .5h9l4 4v11h-13z" fill="#fff" stroke="#1a1a1a" stroke-width="1"/><path d="M10.500 .5v4h4" fill="#ddd" stroke="#1a1a1a" stroke-width="1"/><path d="M14.500 5v10.500h-12" stroke="#555" fill="none" stroke-width="1" opacity=".5"/><path d="M7.500 2.500c3 0 3 3 1.800 4.800l-.5 2h-2.600l-.5-2c-1.200-1.800-1.200-4.800 1.800-4.800z" fill="#e418e4" stroke="#4a004a" stroke-width=".8"/><circle cx="7.500" cy="12.200" r="1.500" fill="#e418e4" stroke="#4a004a" stroke-width=".8"/></svg><span>檔案基準</span></div><div class="tab" style="left:226px;top:65px;width:117px;height:20px"><svg class="a" style="left:0px;top:0px" width="16" height="16" viewBox="0 0 16 16"><g shape-rendering="crispEdges"><rect x="0" y="0" width="16" height="16" fill="#333"/><rect x="1" y="1" width="14" height="14" fill="#fbf6c0"/><rect x="1" y="9" width="3" height="6" fill="#10c028"/><rect x="4" y="11" width="2" height="4" fill="#1838e8"/><rect x="6" y="6" width="3" height="9" fill="#10c028"/><rect x="9" y="9" width="2" height="6" fill="#1838e8"/><rect x="11" y="7" width="2" height="8" fill="#10c028"/><rect x="13" y="10" width="2" height="5" fill="#1838e8"/></g></svg><span>磁碟監視</span></div><div class="tab" style="left:343px;top:65px;width:92px;height:20px"><svg class="a" style="left:0px;top:0px" width="16" height="16" viewBox="0 0 16 16"><path d="M1 5.500h3.500l5-4.500v14l-5-4.500h-3.500z" fill="#f0d418" stroke="#3a2e00" stroke-width="1"/><path d="M7.500 3.500v9" stroke="#8a7400" stroke-width="1.500"/><path d="M11.500 5q2 3 0 6M13.500 3.500q3 4.500 0 9" stroke="#222" stroke-width="1.100" fill="none"/></svg><span>工具</span></div><div class="tab" style="left:435px;top:65px;width:116px;height:20px"><svg class="a" style="left:0px;top:0px" width="16" height="16" viewBox="0 0 16 16"><g shape-rendering="crispEdges"><rect x="0" y="0" width="16" height="16" fill="#444"/><rect x="1" y="1" width="14" height="14" fill="#fbf3b0"/><g fill="#e02020"><rect x="3" y="11" width="1" height="1"/><rect x="6" y="12" width="1" height="1"/><rect x="9" y="10" width="1" height="1"/><rect x="12" y="12" width="1" height="1"/><rect x="5" y="9" width="1" height="1"/><rect x="2" y="13" width="1" height="1"/></g><g fill="#2040e0"><rect x="7" y="6" width="1" height="1"/><rect x="10" y="4" width="1" height="1"/><rect x="12" y="7" width="1" height="1"/><rect x="9" y="8" width="1" height="1"/><rect x="4" y="9" width="1" height="1"/><rect x="11" y="3" width="1" height="1"/></g></g></svg><span>隨機存取</span></div><div class="tab" style="left:122px;top:85px;width:106px;height:20px"><svg class="a" style="left:0px;top:0px" width="16" height="16" viewBox="0 0 16 16"><circle cx="8" cy="3" r="2.500" fill="#38b0ff" stroke="#00307a" stroke-width=".9"/><path d="M4.500 6.500h6v6.500h2v2.500h-9v-2.500h2.500v-4h-1.500z" fill="#1464f4" stroke="#001a70" stroke-width=".9"/><path d="M9.500 7v6.500h2" stroke="#0a2a9a" stroke-width="1" fill="none"/></svg><span>硬碟資訊</span></div><div class="tab" style="left:229px;top:85px;width:84px;height:20px"><svg class="a" style="left:0px;top:0px" width="16" height="16" viewBox="0 0 16 16"><path d="M5.500 .8h5v4.700h4.700v5h-4.700v4.700h-5v-4.700h-4.700v-5h4.700z" fill="#ee1c1c" stroke="#7a0000" stroke-width="1"/><path d="M10 1.500v4.500h4.500M10 10.500v4.200" stroke="#a80808" stroke-width="1" fill="none"/></svg><span>健康</span></div><div class="tab" style="left:314px;top:85px;width:107px;height:20px"><svg class="a" style="left:0px;top:0px" width="16" height="16" viewBox="0 0 16 16"><path d="M9.500 9.500l5 5" stroke="#1a2a9a" stroke-width="3.200" stroke-linecap="round"/><circle cx="6" cy="6" r="4.800" fill="#30d048" stroke="#1e5a2a" stroke-width="1.200"/><circle cx="4.600" cy="4.400" r="1.700" fill="#c0ffc8"/></svg><span>錯誤掃瞄</span></div><div class="tab" style="left:422px;top:85px;width:129px;height:20px"><svg class="a" style="left:0px;top:0px" width="16" height="16" viewBox="0 0 16 16"><path d="M1 3.500l1.500-2.500h4l1.500 2h6.500v12h-13.500z" fill="#d8b010" stroke="#5a4400" stroke-width="1"/><path d="M3 5h11.500v9.500h-11.500z" fill="#f6dc48" stroke="#7a5e00" stroke-width=".8"/><path d="M4 6v8" stroke="#fff6b0" stroke-width="1"/></svg><span>資料夾使用率</span></div><div class="tab sel" style="left:11px;top:82px;width:111px;height:23px"><svg class="a" style="left:0px;top:0px" width="16" height="16" viewBox="0 0 16 16"><path d="M8 .7c4.200 0 4.400 4.300 2.600 7l-.8 2.800h-3.600l-.8-2.800c-1.800-2.700-1.600-7 2.600-7z" fill="#f2ea0c" stroke="#4e4a00" stroke-width="1"/><circle cx="8" cy="13.300" r="1.900" fill="#f2ea0c" stroke="#4e4a00" stroke-width="1"/><path d="M6.300 2.500c-1 1-1 2.500-.4 3.800" stroke="#fffcb0" stroke-width="1" fill="none"/></svg><span>標準測試</span></div><div class="page" style="left:11px;top:104px;width:541px;height:326px"></div><div class="a" style="left:46px;top:133px;width:357px;height:264px;border:2px solid #000;border-right-width:1px;background:linear-gradient(#000 0,#0c0c0c 20%,#242424 60%,#404040 100%)"><svg class="a" style="left:0;top:0" width="354" height="260" shape-rendering="crispEdges"><path d="M17.5 0V260M52.5 0V260M88.5 0V260M123.5 0V260M158.5 0V260M194.5 0V260M229.5 0V260M264.5 0V260M300.5 0V260M335.5 0V260M0 43.5H354M0 130.5H354M0 217.5H354" stroke="#4a4a4a" stroke-width="1" fill="none"/><path d="M0.5 0V260M35.5 0V260M70.5 0V260M105.5 0V260M141.5 0V260M176.5 0V260M211.5 0V260M247.5 0V260M282.5 0V260M317.5 0V260M353.5 0V260M0 0.5H354M0 86.5H354M0 173.5H354" stroke="#6e6e6e" stroke-width="1" fill="none"/><polyline fill="none" stroke="#f5821e" stroke-width="1.1" shape-rendering="auto" points="0.7,28.5 3.1,45.6 5.4,29.0 7.8,35.0 10.2,36.8 12.5,37.2 14.9,37.4 17.3,41.0 19.6,41.2 22.0,45.5 24.4,42.2 26.7,41.4 29.1,36.9 31.5,46.3 33.8,32.1 36.2,41.6 38.6,42.3 40.9,45.4 43.3,40.8 45.7,50.4 48.0,41.1 50.4,52.5 52.8,41.0 55.1,46.1 57.5,41.2 59.9,50.7 62.2,44.2 64.6,48.1 67.0,49.2 69.3,50.8 71.7,45.1 74.1,55.1 76.4,54.1 78.8,47.8 81.2,47.6 83.5,48.4 85.9,47.1 88.3,58.7 90.6,51.1 93.0,54.4 95.4,47.8 97.7,62.0 100.1,58.3 102.5,59.7 104.8,52.5 107.2,53.7 109.6,51.7 111.9,63.1 114.3,53.3 116.7,60.3 119.0,53.2 121.4,61.7 123.8,64.2 126.1,72.9 128.5,57.7 130.9,66.8 133.2,59.8 135.6,77.1 138.0,63.2 140.3,66.7 142.7,56.9 145.1,71.5 147.4,63.2 149.8,68.3 152.2,67.7 154.5,77.4 156.9,71.1 159.3,64.4 161.6,64.3 164.0,70.4 166.4,67.8 168.7,78.5 171.1,71.6 173.5,75.1 175.8,72.5 178.2,73.9 180.5,72.4 182.9,72.5 185.3,72.6 187.6,77.6 190.0,72.7 192.4,87.2 194.7,73.5 197.1,79.6 199.5,73.9 201.8,77.6 204.2,80.1 206.6,83.2 208.9,79.8 211.3,82.9 213.7,77.0 216.0,83.4 218.4,82.7 220.8,85.3 223.1,77.1 225.5,83.7 227.9,81.3 230.2,85.1 232.6,81.0 235.0,88.7 237.3,79.5 239.7,92.0 242.1,89.4 244.4,86.6 246.8,91.4 249.2,95.7 251.5,85.9 253.9,93.3 256.3,97.0 258.6,95.1 261.0,94.1 263.4,91.8 265.7,89.2 268.1,99.4 270.5,97.3 272.8,97.7 275.2,99.3 277.6,110.2 279.9,105.2 282.3,110.7 284.7,108.5 287.0,114.6 289.4,109.2 291.8,114.3 294.1,109.0 296.5,114.8 298.9,111.6 301.2,112.8 303.6,114.9 306.0,119.8 308.3,118.7 310.7,124.8 313.1,123.2 315.4,124.0 317.8,130.7 320.2,128.1 322.5,131.1 324.9,136.7 327.3,131.3 329.6,139.0 332.0,132.9 334.4,138.8 336.7,138.6 339.1,142.1 341.5,141.3 343.8,144.3 346.2,147.9 348.6,154.0 350.9,148.4 353.3,152.4"/><path d="M28 173h1v1h-1zM104 173h1v1h-1zM11 234h1v1h-1zM55 172h1v1h-1zM133 158h1v1h-1zM1 232h1v1h-1zM48 204h1v1h-1zM79 157h1v1h-1zM4 237h1v1h-1zM50 190h1v1h-1zM9 229h1v1h-1zM65 199h1v1h-1zM78 156h1v1h-1zM51 172h1v1h-1zM24 211h1v1h-1zM102 162h1v1h-1zM22 200h1v1h-1zM106 147h1v1h-1zM100 146h1v1h-1zM68 192h1v1h-1zM78 170h1v1h-1zM36 204h1v1h-1zM53 185h1v1h-1zM22 183h1v1h-1zM80 163h1v1h-1zM42 204h1v1h-1zM17 180h1v1h-1zM126 151h1v1h-1zM127 166h1v1h-1zM41 198h1v1h-1zM74 189h1v1h-1zM100 164h1v1h-1zM33 209h1v1h-1zM53 196h1v1h-1zM141 160h1v1h-1zM4 238h1v1h-1zM61 176h1v1h-1zM11 233h1v1h-1zM7 230h1v1h-1zM114 182h1v1h-1zM8 216h1v1h-1zM1 230h1v1h-1zM74 171h1v1h-1zM31 217h1v1h-1zM15 194h1v1h-1zM76 199h1v1h-1zM27 187h1v1h-1zM73 177h1v1h-1zM1 215h1v1h-1zM101 144h1v1h-1zM16 225h1v1h-1zM101 146h1v1h-1zM20 198h1v1h-1zM43 187h1v1h-1zM113 176h1v1h-1zM41 183h1v1h-1zM0 210h1v1h-1zM67 161h1v1h-1zM60 167h1v1h-1zM95 174h1v1h-1zM88 192h1v1h-1zM2 195h1v1h-1zM89 166h1v1h-1zM116 148h1v1h-1zM57 191h1v1h-1zM33 173h1v1h-1zM4 200h1v1h-1zM15 213h1v1h-1zM73 173h1v1h-1zM33 205h1v1h-1zM151 157h1v1h-1zM7 193h1v1h-1zM4 212h1v1h-1zM129 176h1v1h-1zM32 209h1v1h-1zM5 226h1v1h-1zM16 207h1v1h-1zM57 171h1v1h-1zM123 170h1v1h-1zM23 206h1v1h-1zM49 178h1v1h-1zM60 195h1v1h-1zM3 203h1v1h-1zM3 223h1v1h-1zM41 179h1v1h-1zM126 184h1v1h-1zM30 206h1v1h-1zM89 186h1v1h-1zM118 178h1v1h-1zM137 177h1v1h-1zM9 211h1v1h-1zM0 241h1v1h-1zM31 204h1v1h-1zM11 197h1v1h-1zM136 162h1v1h-1zM46 168h1v1h-1zM49 192h1v1h-1zM64 180h1v1h-1zM12 205h1v1h-1zM6 193h1v1h-1zM95 153h1v1h-1zM52 208h1v1h-1zM9 210h1v1h-1zM76 188h1v1h-1zM129 152h1v1h-1zM28 184h1v1h-1zM24 187h1v1h-1zM55 165h1v1h-1zM21 190h1v1h-1zM3 205h1v1h-1zM23 201h1v1h-1zM101 147h1v1h-1zM60 155h1v1h-1zM0 239h1v1h-1zM21 199h1v1h-1zM43 207h1v1h-1zM21 178h1v1h-1zM90 186h1v1h-1zM16 184h1v1h-1zM70 159h1v1h-1zM90 184h1v1h-1zM105 141h1v1h-1zM98 178h1v1h-1zM39 165h1v1h-1zM37 166h1v1h-1zM122 179h1v1h-1zM145 154h1v1h-1zM95 147h1v1h-1zM1 219h1v1h-1zM64 173h1v1h-1zM139 144h1v1h-1zM75 182h1v1h-1zM48 173h1v1h-1zM51 160h1v1h-1zM125 159h1v1h-1zM1 233h1v1h-1zM141 155h1v1h-1zM49 207h1v1h-1zM54 164h1v1h-1zM7 193h1v1h-1zM85 164h1v1h-1zM2 201h1v1h-1zM142 164h1v1h-1zM13 200h1v1h-1zM12 192h1v1h-1zM3 212h1v1h-1zM128 178h1v1h-1zM31 212h1v1h-1zM2 239h1v1h-1zM33 198h1v1h-1zM98 147h1v1h-1zM117 184h1v1h-1zM99 186h1v1h-1zM95 174h1v1h-1zM16 204h1v1h-1zM82 148h1v1h-1zM41 170h1v1h-1zM16 225h1v1h-1zM152 168h1v1h-1zM35 186h1v1h-1zM59 198h1v1h-1zM134 152h1v1h-1zM23 194h1v1h-1zM42 188h1v1h-1zM14 182h1v1h-1zM57 187h1v1h-1zM145 176h1v1h-1zM48 162h1v1h-1zM40 181h1v1h-1zM141 169h1v1h-1zM2 201h1v1h-1zM119 176h1v1h-1zM3 223h1v1h-1zM112 145h1v1h-1zM9 231h1v1h-1zM29 212h1v1h-1zM139 172h1v1h-1zM19 220h1v1h-1zM92 156h1v1h-1zM35 198h1v1h-1zM24 223h1v1h-1zM64 183h1v1h-1zM93 155h1v1h-1zM43 171h1v1h-1zM49 191h1v1h-1zM27 188h1v1h-1zM44 202h1v1h-1zM25 212h1v1h-1zM2 236h1v1h-1zM72 185h1v1h-1zM75 192h1v1h-1zM123 157h1v1h-1zM42 169h1v1h-1zM36 169h1v1h-1zM20 207h1v1h-1zM71 165h1v1h-1zM187 177h1v1h-1zM167 170h1v1h-1zM19 192h1v1h-1zM96 164h1v1h-1zM41 164h1v1h-1zM65 183h1v1h-1zM2 197h1v1h-1zM82 162h1v1h-1zM73 176h1v1h-1zM50 173h1v1h-1zM9 205h1v1h-1zM0 235h1v1h-1zM116 162h1v1h-1zM3 200h1v1h-1zM105 155h1v1h-1zM143 139h1v1h-1zM146 165h1v1h-1zM85 176h1v1h-1zM71 175h1v1h-1zM12 183h1v1h-1zM3 195h1v1h-1zM15 189h1v1h-1zM93 177h1v1h-1zM16 201h1v1h-1zM71 182h1v1h-1zM101 163h1v1h-1zM93 169h1v1h-1zM3 224h1v1h-1zM63 180h1v1h-1zM43 183h1v1h-1zM103 150h1v1h-1zM100 148h1v1h-1zM165 180h1v1h-1zM25 175h1v1h-1zM98 177h1v1h-1zM110 186h1v1h-1zM176 137h1v1h-1zM69 159h1v1h-1zM169 144h1v1h-1zM12 230h1v1h-1zM15 200h1v1h-1zM90 163h1v1h-1zM154 183h1v1h-1zM151 158h1v1h-1zM74 149h1v1h-1zM1 242h1v1h-1zM21 221h1v1h-1zM137 165h1v1h-1zM82 155h1v1h-1zM1 201h1v1h-1zM95 151h1v1h-1zM1 202h1v1h-1zM100 144h1v1h-1zM3 195h1v1h-1zM156 145h1v1h-1zM105 186h1v1h-1zM128 157h1v1h-1zM23 185h1v1h-1zM1 241h1v1h-1zM5 228h1v1h-1zM97 167h1v1h-1zM9 226h1v1h-1zM101 157h1v1h-1zM37 178h1v1h-1zM39 212h1v1h-1zM2 231h1v1h-1zM90 168h1v1h-1zM29 208h1v1h-1zM72 154h1v1h-1zM61 155h1v1h-1zM82 183h1v1h-1zM148 150h1v1h-1zM55 183h1v1h-1zM29 208h1v1h-1zM2 211h1v1h-1zM5 225h1v1h-1zM147 165h1v1h-1zM85 153h1v1h-1zM144 147h1v1h-1zM12 230h1v1h-1zM131 186h1v1h-1zM81 152h1v1h-1zM35 170h1v1h-1zM176 169h1v1h-1zM52 190h1v1h-1zM43 177h1v1h-1zM53 184h1v1h-1zM13 232h1v1h-1zM97 191h1v1h-1zM8 217h1v1h-1zM111 170h1v1h-1zM1 223h1v1h-1zM72 194h1v1h-1zM58 183h1v1h-1zM35 190h1v1h-1zM111 153h1v1h-1zM21 193h1v1h-1zM100 177h1v1h-1zM69 164h1v1h-1zM128 168h1v1h-1zM120 175h1v1h-1zM90 162h1v1h-1zM21 224h1v1h-1zM24 222h1v1h-1zM103 151h1v1h-1zM11 192h1v1h-1zM31 184h1v1h-1zM27 177h1v1h-1zM0 237h1v1h-1zM55 167h1v1h-1zM1 208h1v1h-1zM22 218h1v1h-1zM114 169h1v1h-1zM101 185h1v1h-1zM106 174h1v1h-1zM161 163h1v1h-1zM20 185h1v1h-1zM8 209h1v1h-1zM25 209h1v1h-1zM48 196h1v1h-1zM11 227h1v1h-1zM64 153h1v1h-1zM104 185h1v1h-1zM0 236h1v1h-1zM23 185h1v1h-1zM118 149h1v1h-1zM39 207h1v1h-1zM59 164h1v1h-1zM63 153h1v1h-1zM138 153h1v1h-1zM125 187h1v1h-1zM14 207h1v1h-1zM93 176h1v1h-1zM24 193h1v1h-1zM3 197h1v1h-1zM108 170h1v1h-1zM7 204h1v1h-1zM48 208h1v1h-1zM189 179h1v1h-1zM60 162h1v1h-1zM100 179h1v1h-1zM105 183h1v1h-1zM139 186h1v1h-1zM129 176h1v1h-1zM61 193h1v1h-1zM20 212h1v1h-1zM111 190h1v1h-1zM109 165h1v1h-1zM141 154h1v1h-1zM103 158h1v1h-1zM65 184h1v1h-1zM5 235h1v1h-1zM11 200h1v1h-1zM45 164h1v1h-1zM82 163h1v1h-1zM38 194h1v1h-1zM103 152h1v1h-1zM4 207h1v1h-1zM92 173h1v1h-1zM58 195h1v1h-1zM18 199h1v1h-1zM75 179h1v1h-1zM111 189h1v1h-1zM5 235h1v1h-1zM78 180h1v1h-1zM30 194h1v1h-1zM18 182h1v1h-1zM151 141h1v1h-1zM7 209h1v1h-1zM147 163h1v1h-1zM64 199h1v1h-1zM114 152h1v1h-1zM12 213h1v1h-1zM123 154h1v1h-1zM113 165h1v1h-1zM30 193h1v1h-1zM53 208h1v1h-1zM108 150h1v1h-1zM41 196h1v1h-1zM1 198h1v1h-1zM123 179h1v1h-1zM5 214h1v1h-1zM18 199h1v1h-1zM8 192h1v1h-1zM104 159h1v1h-1zM134 182h1v1h-1zM28 188h1v1h-1zM23 176h1v1h-1zM29 188h1v1h-1zM66 168h1v1h-1zM193 149h1v1h-1zM17 204h1v1h-1zM7 198h1v1h-1zM117 188h1v1h-1zM5 240h1v1h-1zM48 187h1v1h-1zM49 188h1v1h-1zM48 164h1v1h-1zM2 234h1v1h-1zM62 192h1v1h-1zM3 218h1v1h-1zM77 167h1v1h-1zM10 219h1v1h-1zM111 184h1v1h-1zM4 194h1v1h-1zM98 174h1v1h-1zM13 216h1v1h-1zM6 236h1v1h-1zM0 238h1v1h-1zM9 202h1v1h-1zM116 182h1v1h-1zM15 183h1v1h-1zM1 223h1v1h-1zM85 192h1v1h-1zM67 178h1v1h-1zM147 156h1v1h-1zM113 160h1v1h-1zM3 226h1v1h-1zM88 195h1v1h-1zM104 149h1v1h-1zM132 141h1v1h-1zM62 199h1v1h-1zM96 165h1v1h-1zM0 228h1v1h-1zM194 143h1v1h-1zM8 211h1v1h-1zM27 200h1v1h-1zM58 193h1v1h-1zM126 145h1v1h-1zM129 165h1v1h-1zM67 185h1v1h-1zM165 137h1v1h-1zM1 198h1v1h-1zM163 164h1v1h-1zM46 176h1v1h-1zM90 193h1v1h-1zM149 151h1v1h-1zM61 161h1v1h-1zM140 175h1v1h-1zM58 168h1v1h-1zM128 152h1v1h-1zM95 176h1v1h-1zM140 179h1v1h-1zM11 226h1v1h-1zM86 195h1v1h-1zM23 194h1v1h-1zM44 201h1v1h-1zM21 199h1v1h-1zM111 156h1v1h-1zM26 180h1v1h-1zM135 144h1v1h-1zM165 141h1v1h-1zM78 187h1v1h-1zM68 178h1v1h-1zM76 173h1v1h-1zM45 201h1v1h-1zM119 154h1v1h-1zM3 213h1v1h-1zM116 186h1v1h-1zM87 145h1v1h-1zM45 188h1v1h-1zM75 166h1v1h-1zM3 213h1v1h-1zM72 162h1v1h-1zM69 160h1v1h-1zM18 183h1v1h-1zM85 164h1v1h-1zM134 149h1v1h-1zM60 157h1v1h-1zM33 168h1v1h-1zM28 202h1v1h-1zM5 201h1v1h-1zM87 156h1v1h-1zM6 212h1v1h-1zM88 176h1v1h-1zM9 229h1v1h-1zM37 216h1v1h-1zM44 162h1v1h-1zM1 213h1v1h-1zM115 164h1v1h-1zM152 177h1v1h-1zM99 189h1v1h-1zM115 144h1v1h-1zM34 178h1v1h-1zM5 236h1v1h-1zM69 159h1v1h-1zM21 212h1v1h-1zM13 230h1v1h-1zM79 148h1v1h-1zM70 188h1v1h-1zM130 142h1v1h-1zM34 167h1v1h-1zM16 217h1v1h-1zM87 167h1v1h-1zM102 165h1v1h-1zM43 181h1v1h-1zM43 181h1v1h-1zM56 197h1v1h-1zM172 156h1v1h-1zM172 141h1v1h-1zM94 162h1v1h-1zM126 185h1v1h-1zM1 199h1v1h-1zM21 182h1v1h-1zM42 179h1v1h-1zM123 161h1v1h-1zM11 206h1v1h-1zM23 175h1v1h-1zM83 161h1v1h-1zM7 212h1v1h-1zM64 160h1v1h-1zM70 182h1v1h-1zM137 164h1v1h-1zM128 159h1v1h-1zM25 185h1v1h-1zM22 195h1v1h-1zM51 165h1v1h-1zM149 142h1v1h-1zM99 165h1v1h-1zM69 176h1v1h-1zM56 196h1v1h-1zM41 164h1v1h-1zM50 172h1v1h-1zM14 224h1v1h-1zM72 161h1v1h-1zM14 212h1v1h-1zM148 171h1v1h-1zM9 220h1v1h-1zM96 152h1v1h-1zM32 168h1v1h-1zM112 166h1v1h-1zM151 161h1v1h-1zM39 178h1v1h-1zM99 190h1v1h-1zM5 211h1v1h-1zM105 154h1v1h-1zM81 197h1v1h-1zM1 229h1v1h-1zM84 190h1v1h-1zM40 211h1v1h-1zM40 175h1v1h-1zM148 174h1v1h-1zM6 225h1v1h-1zM57 156h1v1h-1zM22 179h1v1h-1zM94 152h1v1h-1zM33 196h1v1h-1zM25 216h1v1h-1zM98 166h1v1h-1zM22 198h1v1h-1zM39 168h1v1h-1zM14 196h1v1h-1zM60 183h1v1h-1zM8 232h1v1h-1zM77 159h1v1h-1zM20 211h1v1h-1zM60 174h1v1h-1zM98 178h1v1h-1zM89 175h1v1h-1zM1 242h1v1h-1zM2 212h1v1h-1zM48 202h1v1h-1zM118 167h1v1h-1zM48 188h1v1h-1zM35 173h1v1h-1zM109 158h1v1h-1zM159 135h1v1h-1zM7 198h1v1h-1zM35 176h1v1h-1zM106 152h1v1h-1zM52 177h1v1h-1zM2 242h1v1h-1zM158 179h1v1h-1zM95 175h1v1h-1zM6 196h1v1h-1zM0 208h1v1h-1zM2 200h1v1h-1zM39 172h1v1h-1zM3 240h1v1h-1zM174 138h1v1h-1zM87 192h1v1h-1zM56 182h1v1h-1zM164 162h1v1h-1zM27 209h1v1h-1zM124 161h1v1h-1zM113 151h1v1h-1zM45 188h1v1h-1zM42 208h1v1h-1zM31 193h1v1h-1zM36 175h1v1h-1zM77 197h1v1h-1zM47 207h1v1h-1zM12 231h1v1h-1zM35 183h1v1h-1zM26 217h1v1h-1zM19 181h1v1h-1zM1 222h1v1h-1zM91 162h1v1h-1zM103 168h1v1h-1zM130 186h1v1h-1zM108 188h1v1h-1zM51 192h1v1h-1zM10 196h1v1h-1zM92 158h1v1h-1zM155 183h1v1h-1zM26 204h1v1h-1zM97 178h1v1h-1zM50 163h1v1h-1zM50 186h1v1h-1zM7 208h1v1h-1zM95 149h1v1h-1zM154 149h1v1h-1zM39 181h1v1h-1zM73 179h1v1h-1zM101 142h1v1h-1zM126 157h1v1h-1zM31 196h1v1h-1zM141 155h1v1h-1zM21 218h1v1h-1zM36 216h1v1h-1zM92 156h1v1h-1zM35 216h1v1h-1zM165 135h1v1h-1zM24 219h1v1h-1zM31 196h1v1h-1zM33 199h1v1h-1zM55 198h1v1h-1zM121 162h1v1h-1zM2 227h1v1h-1zM58 154h1v1h-1zM3 204h1v1h-1zM50 184h1v1h-1zM101 189h1v1h-1zM11 194h1v1h-1zM52 177h1v1h-1zM131 166h1v1h-1zM112 177h1v1h-1zM5 209h1v1h-1zM42 165h1v1h-1zM32 176h1v1h-1zM103 156h1v1h-1zM38 213h1v1h-1zM69 200h1v1h-1zM97 169h1v1h-1zM3 221h1v1h-1zM6 217h1v1h-1zM97 179h1v1h-1zM112 140h1v1h-1zM0 231h1v1h-1zM79 194h1v1h-1zM47 164h1v1h-1zM1 198h1v1h-1zM13 221h1v1h-1zM82 191h1v1h-1zM10 196h1v1h-1zM90 151h1v1h-1zM72 175h1v1h-1zM1 199h1v1h-1zM61 175h1v1h-1zM140 170h1v1h-1zM85 153h1v1h-1zM22 189h1v1h-1zM1 226h1v1h-1zM156 138h1v1h-1zM15 212h1v1h-1zM1 207h1v1h-1zM47 199h1v1h-1zM2 197h1v1h-1zM22 187h1v1h-1zM12 213h1v1h-1zM13 183h1v1h-1zM51 170h1v1h-1zM164 137h1v1h-1zM108 175h1v1h-1zM86 166h1v1h-1zM48 196h1v1h-1zM1 238h1v1h-1zM5 200h1v1h-1zM44 161h1v1h-1zM41 179h1v1h-1zM102 190h1v1h-1zM52 204h1v1h-1zM79 167h1v1h-1zM61 171h1v1h-1zM55 170h1v1h-1zM1 234h1v1h-1zM22 181h1v1h-1zM16 207h1v1h-1zM137 160h1v1h-1zM42 173h1v1h-1zM49 191h1v1h-1zM85 160h1v1h-1zM63 163h1v1h-1zM156 181h1v1h-1zM56 207h1v1h-1zM75 169h1v1h-1zM70 156h1v1h-1zM127 142h1v1h-1zM154 172h1v1h-1zM1 230h1v1h-1zM10 186h1v1h-1zM117 174h1v1h-1zM15 226h1v1h-1zM3 237h1v1h-1zM141 146h1v1h-1zM119 153h1v1h-1zM145 153h1v1h-1zM96 175h1v1h-1zM157 143h1v1h-1zM42 203h1v1h-1zM112 185h1v1h-1zM1 230h1v1h-1zM60 205h1v1h-1zM48 206h1v1h-1zM6 205h1v1h-1zM26 203h1v1h-1zM19 212h1v1h-1zM49 190h1v1h-1zM54 195h1v1h-1zM11 221h1v1h-1zM79 179h1v1h-1zM20 202h1v1h-1zM72 197h1v1h-1zM106 170h1v1h-1zM130 182h1v1h-1zM113 189h1v1h-1zM109 142h1v1h-1zM34 207h1v1h-1zM38 211h1v1h-1zM51 196h1v1h-1zM19 204h1v1h-1zM39 213h1v1h-1zM56 172h1v1h-1zM68 186h1v1h-1zM151 160h1v1h-1zM108 151h1v1h-1zM107 183h1v1h-1zM134 146h1v1h-1zM80 155h1v1h-1zM12 223h1v1h-1zM21 189h1v1h-1zM39 168h1v1h-1zM98 149h1v1h-1zM110 165h1v1h-1zM64 188h1v1h-1zM0 230h1v1h-1zM9 219h1v1h-1zM113 146h1v1h-1zM116 169h1v1h-1zM22 207h1v1h-1zM7 209h1v1h-1zM11 233h1v1h-1zM17 214h1v1h-1zM0 220h1v1h-1zM2 238h1v1h-1zM31 174h1v1h-1zM32 217h1v1h-1zM12 206h1v1h-1zM83 161h1v1h-1zM80 149h1v1h-1zM61 204h1v1h-1zM65 190h1v1h-1zM36 203h1v1h-1zM25 205h1v1h-1zM136 154h1v1h-1zM5 205h1v1h-1zM93 181h1v1h-1zM114 172h1v1h-1zM4 229h1v1h-1zM1 215h1v1h-1zM10 204h1v1h-1zM6 225h1v1h-1zM32 199h1v1h-1zM44 194h1v1h-1zM40 175h1v1h-1zM9 232h1v1h-1zM3 199h1v1h-1zM141 185h1v1h-1zM49 161h1v1h-1zM19 199h1v1h-1zM122 169h1v1h-1zM96 150h1v1h-1zM20 183h1v1h-1zM98 163h1v1h-1zM191 155h1v1h-1zM19 196h1v1h-1zM1 225h1v1h-1zM149 142h1v1h-1zM4 195h1v1h-1zM117 184h1v1h-1zM3 194h1v1h-1zM120 139h1v1h-1zM141 164h1v1h-1zM61 181h1v1h-1zM71 171h1v1h-1zM75 180h1v1h-1zM11 205h1v1h-1zM92 148h1v1h-1zM143 152h1v1h-1zM104 170h1v1h-1zM52 176h1v1h-1zM103 148h1v1h-1zM98 186h1v1h-1zM19 215h1v1h-1zM112 147h1v1h-1zM85 174h1v1h-1zM22 198h1v1h-1zM25 184h1v1h-1zM127 179h1v1h-1zM101 151h1v1h-1zM106 177h1v1h-1zM20 200h1v1h-1zM76 184h1v1h-1zM123 167h1v1h-1zM154 174h1v1h-1zM9 212h1v1h-1zM69 193h1v1h-1zM59 189h1v1h-1zM77 197h1v1h-1zM15 204h1v1h-1zM5 209h1v1h-1zM94 164h1v1h-1zM2 196h1v1h-1zM114 187h1v1h-1zM59 160h1v1h-1zM9 232h1v1h-1zM5 240h1v1h-1zM17 185h1v1h-1zM121 157h1v1h-1zM151 171h1v1h-1zM0 209h1v1h-1zM22 201h1v1h-1zM73 167h1v1h-1zM65 194h1v1h-1zM40 181h1v1h-1zM35 197h1v1h-1zM1 239h1v1h-1zM22 193h1v1h-1zM112 141h1v1h-1zM138 140h1v1h-1zM24 181h1v1h-1zM177 166h1v1h-1zM150 148h1v1h-1zM26 195h1v1h-1zM1 244h1v1h-1zM65 176h1v1h-1zM1 236h1v1h-1zM4 223h1v1h-1zM100 172h1v1h-1zM152 169h1v1h-1zM57 166h1v1h-1zM41 190h1v1h-1zM33 174h1v1h-1zM95 154h1v1h-1zM145 152h1v1h-1zM61 201h1v1h-1zM33 184h1v1h-1zM64 163h1v1h-1zM23 219h1v1h-1zM92 176h1v1h-1zM121 158h1v1h-1zM3 241h1v1h-1zM40 192h1v1h-1zM86 152h1v1h-1zM64 257h1v1h-1zM68 257h1v1h-1zM96 257h1v1h-1zM99 257h1v1h-1z" fill="#ffff00"/></svg></div><div class="ax" style="left:3px;top:129px;width:40px;text-align:right">150</div><div class="ax" style="left:3px;top:215px;width:40px;text-align:right">100</div><div class="ax" style="left:3px;top:302px;width:40px;text-align:right">50</div><div class="ax" style="left:48px;top:121px">MB/<b>秒</b></div><div class="ax" style="left:361px;top:122px;width:40px;text-align:right">ms</div><div class="ax" style="left:406px;top:130px">45</div><div class="ax" style="left:406px;top:216px">30</div><div class="ax" style="left:406px;top:303px">15</div><div class="ax" style="left:28.5px;top:396px;width:40px;text-align:center">0</div><div class="ax" style="left:63.8px;top:396px;width:40px;text-align:center">10</div><div class="ax" style="left:99.1px;top:396px;width:40px;text-align:center">20</div><div class="ax" style="left:134.39999999999998px;top:396px;width:40px;text-align:center">30</div><div class="ax" style="left:169.7px;top:396px;width:40px;text-align:center">40</div><div class="ax" style="left:205.0px;top:396px;width:40px;text-align:center">50</div><div class="ax" style="left:240.29999999999995px;top:396px;width:40px;text-align:center">60</div><div class="ax" style="left:275.59999999999997px;top:396px;width:40px;text-align:center">70</div><div class="ax" style="left:310.9px;top:396px;width:40px;text-align:center">80</div><div class="ax" style="left:346.2px;top:396px;width:40px;text-align:center">90</div><div class="ax" style="left:387.5px;top:396px">100%</div><div class="btn zh" style="left:456px;top:116px;width:73px;height:19px;line-height:16px">開始</div><div class="radio" style="left:455px;top:144px"></div><div class="radio on" style="left:455px;top:159px"></div><div class="lbl" style="left:471px;top:143px">讀取</div><div class="lbl" style="left:471px;top:158px">寫入</div><div class="a" style="left:438px;top:183px;width:110px;height:118px;border:1px solid #d5dfe5;border-radius:4px"></div><div class="lbl" style="left:444px;top:176px;background:#fff;padding:0 2px">傳輸速率</div><div class="lbl" style="left:444px;top:192px">最低值：</div><div class="val" style="left:444px;top:210px;width:92px;color:#1eb4ff">61.2 MB/秒</div><div class="lbl" style="left:444px;top:225px">最大值：</div><div class="val" style="left:444px;top:243px;width:92px;color:#1eb4ff">134.4 MB/秒</div><div class="lbl" style="left:444px;top:258px">平均值：</div><div class="val" style="left:444px;top:276px;width:92px;color:#1eb4ff">104.5 MB/秒</div><div class="lbl" style="left:444px;top:308px">存取時間：</div><div class="val" style="left:444px;top:325px;width:92px;color:#ffff00">13.8 ms</div><div class="lbl" style="left:444px;top:347px">突發速率</div><div class="val" style="left:444px;top:364px;width:92px;color:#fff">126.2 MB/秒</div><div class="lbl" style="left:444px;top:386px"><span style="letter-spacing:-.5px">CPU </span>使用率</div><div class="val" style="left:444px;top:403px;width:92px;color:#fff">-1.0%</div></div></div><div class="win" style="left:580px;top:0px;width:578px;height:469px"><div class="tbar"></div><div class="glow"></div><div class="edge"></div><svg class="a" style="left:6px;top:6px" width="18" height="18" viewBox="0 0 18 18"><path d="M10.300 .8L16.600 6L7 16.200L.9 9.400Z" fill="#7f95a5" stroke="#c4d2dc" stroke-width=".9" stroke-linejoin="round"/><path d="M1.500 9.800L7 15.600L9 13.500L3.500 8Z" fill="#5a7282"/><path d="M2.500 9L5 6.500" stroke="#e8f0f4" stroke-width="1.300"/><circle cx="9.800" cy="6.500" r="3.900" fill="#e2bca4"/><circle cx="9" cy="5.500" r="1.800" fill="#eccdb8"/></svg><div class="ttl">HD Tune Pro 3.50 - 硬碟檢測-維護工具</div><div class="capb" style="left:469px;width:104px"><i style="left:27px"></i><i style="left:54px"></i><svg class="a" style="left:0;top:0" width="104" height="19"><rect x="9" y="10" width="10" height="3" fill="#fff"/><rect x="37.500" y="5.500" width="8" height="6" fill="none" stroke="#fff" stroke-width="2"/><path d="M74 5l8 8M82 5l-8 8" stroke="#fff" stroke-width="2.600"/></svg></div><div class="cliB" style="left:5px;top:27px;width:568px;height:437px"></div><div class="cliB2" style="left:6px;top:28px;width:566px;height:435px"></div><div class="cli" style="width:564px;height:433px"><div class="menu"><span style="left:8px">檔案(<u>F</u>)</span><span style="left:64px">說明(<u>H</u>)</span></div><div class="tool"></div><div class="sep"></div><div class="combo" style="left:12px;top:28px;width:224px;height:20px;line-height:17px;padding-left:2px;font-size:12px;letter-spacing:-.12px">ST32000641AS (2000 GB)<b></b></div><svg class="a" style="left:241px;top:29px" width="11" height="20" viewBox="0 0 11 20"><g shape-rendering="crispEdges"><rect x="3" y="1" width="5" height="14" fill="#222"/><rect x="3" y="1" width="1" height="13" fill="#b0b0b0"/><rect x="4" y="1" width="3" height="13" fill="#e81010"/><rect x="4" y="1" width="2" height="3" fill="#20d8e8"/></g><circle cx="5.500" cy="15" r="3.800" fill="#e81010" stroke="#333" stroke-width=".8"/><circle cx="4.300" cy="14.200" r="1" fill="#ffd0d0"/></svg><div class="lbl" style="left:255px;top:31px;font-weight:bold;font-size:13px;line-height:16px">48蚓</div><div class="btn" style="left:342px;top:26px;width:27px;height:24px"><svg class="a" style="left:3px;top:2px" width="18" height="18" viewBox="0 0 18 18"><path d="M2.500 1.500h5l3 3v9h-8z" fill="#fff" stroke="#1a1a1a" stroke-width="1"/><path d="M7.500 1.500v3h3" fill="none" stroke="#1a1a1a" stroke-width="1"/><path d="M8.500 3.500h5l3 3v9.500h-8z" fill="#fff" stroke="#1a1a1a" stroke-width="1"/><path d="M13.500 3.500v3h3" fill="none" stroke="#1a1a1a" stroke-width="1"/><path d="M16.500 7v9.500h-7.500" fill="none" stroke="#666" stroke-width="1" opacity=".6"/><g shape-rendering="crispEdges" fill="#1e8cff"><rect x="4" y="5" width="4" height="1"/><rect x="4" y="7" width="4" height="1"/><rect x="4" y="9" width="4" height="1"/><rect x="10" y="8" width="5" height="1"/><rect x="10" y="10" width="5" height="1"/><rect x="10" y="12" width="5" height="1"/></g></svg></div><div class="btn" style="left:372px;top:26px;width:27px;height:24px"><svg class="a" style="left:3px;top:2px" width="18" height="18" viewBox="0 0 18 18"><path d="M2.500 1.500h5l3 3v9h-8z" fill="#fff" stroke="#1a1a1a" stroke-width="1"/><path d="M7.500 1.500v3h3" fill="none" stroke="#1a1a1a" stroke-width="1"/><path d="M8.500 3.500h5l3 3v9.500h-8z" fill="#fff" stroke="#1a1a1a" stroke-width="1"/><path d="M13.500 3.500v3h3" fill="none" stroke="#1a1a1a" stroke-width="1"/><path d="M16.500 7v9.500h-7.500" fill="none" stroke="#666" stroke-width="1" opacity=".6"/><g shape-rendering="crispEdges"><rect x="4" y="5" width="4" height="5" fill="#18c838"/><rect x="4" y="5" width="2" height="2" fill="#2a6cf0"/><rect x="6" y="7" width="2" height="2" fill="#e03818"/><rect x="10" y="8" width="5" height="6" fill="#18c838"/><rect x="10" y="8" width="2" height="2" fill="#2a6cf0"/><rect x="12" y="10" width="2" height="2" fill="#e03818"/></g></svg></div><div class="btn" style="left:402px;top:26px;width:27px;height:24px"><svg class="a" style="left:3px;top:2px" width="18" height="18" viewBox="0 0 18 18"><g shape-rendering="crispEdges"><rect x="2" y="2" width="15" height="15" fill="#222"/><rect x="2" y="2" width="14" height="14" fill="#2a3ce8"/><rect x="4" y="2" width="10" height="7" fill="#d0d0d0"/><rect x="5" y="3" width="8" height="1" fill="#888"/><rect x="5" y="5" width="8" height="1" fill="#888"/><rect x="5" y="7" width="8" height="1" fill="#888"/><rect x="5" y="11" width="8" height="5" fill="#b0b0b0"/><rect x="10" y="12" width="2" height="3" fill="#333"/></g></svg></div><div class="btn" style="left:432px;top:26px;width:27px;height:24px"><svg class="a" style="left:3px;top:2px" width="18" height="18" viewBox="0 0 18 18"><path d="M11.3 6.0L9.7 7.3L9.9 9.4L7.8 9.2L6.5 10.8L5.2 9.2L3.1 9.4L3.3 7.3L1.7 6.0L3.3 4.7L3.1 2.6L5.2 2.8L6.5 1.2L7.8 2.8L9.9 2.6L9.7 4.7Z" fill="#f0e010" stroke="#4a4400" stroke-width=".9"/><circle cx="6.5" cy="6" r="1.5" fill="#8a8a70" stroke="#333" stroke-width=".6"/><path d="M16.3 11.5L14.7 12.8L14.9 14.9L12.8 14.7L11.5 16.3L10.2 14.7L8.1 14.9L8.3 12.8L6.7 11.5L8.3 10.2L8.1 8.1L10.2 8.3L11.5 6.7L12.8 8.3L14.9 8.1L14.7 10.2Z" fill="#f0e010" stroke="#4a4400" stroke-width=".9"/><circle cx="11.5" cy="11.5" r="1.5" fill="#8a8a70" stroke="#333" stroke-width=".6"/></svg></div><div class="btn" style="left:466px;top:26px;width:27px;height:24px"><svg class="a" style="left:3px;top:1px" width="19" height="19" viewBox="0 0 19 19"><defs><linearGradient id="mg" x1="0" y1="0" x2="1" y2="1"><stop offset="0" stop-color="#d428d4"/><stop offset=".5" stop-color="#b010b0"/><stop offset="1" stop-color="#8a008a"/></linearGradient></defs><rect x="0" y="0" width="19" height="19" rx="1.500" fill="url(#mg)"/><path d="M.5 18.500v-18h18" fill="none" stroke="#e860e8" stroke-width="1"/><path d="M9.500 3v11" fill="none" stroke="#fff" stroke-width="2.200"/><path d="M4.500 10.500l5 5.500 5-5.500z" fill="#fff" stroke="#fff" stroke-width="1" stroke-linejoin="miter"/></svg></div><div class="btn zh" style="left:501px;top:26px;width:53px;height:24px;line-height:21px">離開</div><div class="tab" style="left:13px;top:65px;width:107px;height:20px"><svg class="a" style="left:0px;top:0px" width="16" height="16" viewBox="0 0 16 16"><path d="M8 .7c4.200 0 4.400 4.300 2.600 7l-.8 2.800h-3.600l-.8-2.800c-1.800-2.700-1.600-7 2.600-7z" fill="#f2ea0c" stroke="#4e4a00" stroke-width="1"/><circle cx="8" cy="13.300" r="1.900" fill="#f2ea0c" stroke="#4e4a00" stroke-width="1"/><path d="M6.300 2.500c-1 1-1 2.500-.4 3.800" stroke="#fffcb0" stroke-width="1" fill="none"/></svg><span>標準測試</span></div><div class="tab" style="left:122px;top:65px;width:106px;height:20px"><svg class="a" style="left:0px;top:0px" width="16" height="16" viewBox="0 0 16 16"><circle cx="8" cy="3" r="2.500" fill="#38b0ff" stroke="#00307a" stroke-width=".9"/><path d="M4.500 6.500h6v6.500h2v2.500h-9v-2.500h2.500v-4h-1.500z" fill="#1464f4" stroke="#001a70" stroke-width=".9"/><path d="M9.500 7v6.500h2" stroke="#0a2a9a" stroke-width="1" fill="none"/></svg><span>硬碟資訊</span></div><div class="tab" style="left:229px;top:65px;width:84px;height:20px"><svg class="a" style="left:0px;top:0px" width="16" height="16" viewBox="0 0 16 16"><path d="M5.500 .8h5v4.700h4.700v5h-4.700v4.700h-5v-4.700h-4.700v-5h4.700z" fill="#ee1c1c" stroke="#7a0000" stroke-width="1"/><path d="M10 1.500v4.500h4.500M10 10.500v4.200" stroke="#a80808" stroke-width="1" fill="none"/></svg><span>健康</span></div><div class="tab" style="left:314px;top:65px;width:107px;height:20px"><svg class="a" style="left:0px;top:0px" width="16" height="16" viewBox="0 0 16 16"><path d="M9.500 9.500l5 5" stroke="#1a2a9a" stroke-width="3.200" stroke-linecap="round"/><circle cx="6" cy="6" r="4.800" fill="#30d048" stroke="#1e5a2a" stroke-width="1.200"/><circle cx="4.600" cy="4.400" r="1.700" fill="#c0ffc8"/></svg><span>錯誤掃瞄</span></div><div class="tab" style="left:422px;top:65px;width:129px;height:20px"><svg class="a" style="left:0px;top:0px" width="16" height="16" viewBox="0 0 16 16"><path d="M1 3.500l1.500-2.500h4l1.500 2h6.500v12h-13.500z" fill="#d8b010" stroke="#5a4400" stroke-width="1"/><path d="M3 5h11.500v9.500h-11.500z" fill="#f6dc48" stroke="#7a5e00" stroke-width=".8"/><path d="M4 6v8" stroke="#fff6b0" stroke-width="1"/></svg><span>資料夾使用率</span></div><div class="tab" style="left:13px;top:85px;width:94px;height:20px"><svg class="a" style="left:0px;top:0px" width="16" height="16" viewBox="0 0 16 16"><g shape-rendering="crispEdges"><rect x="5" y="0" width="5" height="2" fill="#222"/><rect x="1" y="1" width="13" height="3" fill="#2a2a2a"/><rect x="2" y="4" width="11" height="12" fill="#3c3c3c"/><rect x="3" y="4" width="2" height="11" fill="#8a8a8a"/><rect x="5" y="4" width="2" height="11" fill="#c8c8c8"/><rect x="7" y="4" width="1" height="11" fill="#777"/><rect x="9" y="4" width="2" height="11" fill="#666"/></g></svg><span>清除</span></div><div class="tab" style="left:226px;top:85px;width:117px;height:20px"><svg class="a" style="left:0px;top:0px" width="16" height="16" viewBox="0 0 16 16"><g shape-rendering="crispEdges"><rect x="0" y="0" width="16" height="16" fill="#333"/><rect x="1" y="1" width="14" height="14" fill="#fbf6c0"/><rect x="1" y="9" width="3" height="6" fill="#10c028"/><rect x="4" y="11" width="2" height="4" fill="#1838e8"/><rect x="6" y="6" width="3" height="9" fill="#10c028"/><rect x="9" y="9" width="2" height="6" fill="#1838e8"/><rect x="11" y="7" width="2" height="8" fill="#10c028"/><rect x="13" y="10" width="2" height="5" fill="#1838e8"/></g></svg><span>磁碟監視</span></div><div class="tab" style="left:343px;top:85px;width:92px;height:20px"><svg class="a" style="left:0px;top:0px" width="16" height="16" viewBox="0 0 16 16"><path d="M1 5.500h3.500l5-4.500v14l-5-4.500h-3.500z" fill="#f0d418" stroke="#3a2e00" stroke-width="1"/><path d="M7.500 3.500v9" stroke="#8a7400" stroke-width="1.500"/><path d="M11.500 5q2 3 0 6M13.500 3.500q3 4.500 0 9" stroke="#222" stroke-width="1.100" fill="none"/></svg><span>工具</span></div><div class="tab" style="left:435px;top:85px;width:116px;height:20px"><svg class="a" style="left:0px;top:0px" width="16" height="16" viewBox="0 0 16 16"><g shape-rendering="crispEdges"><rect x="0" y="0" width="16" height="16" fill="#444"/><rect x="1" y="1" width="14" height="14" fill="#fbf3b0"/><g fill="#e02020"><rect x="3" y="11" width="1" height="1"/><rect x="6" y="12" width="1" height="1"/><rect x="9" y="10" width="1" height="1"/><rect x="12" y="12" width="1" height="1"/><rect x="5" y="9" width="1" height="1"/><rect x="2" y="13" width="1" height="1"/></g><g fill="#2040e0"><rect x="7" y="6" width="1" height="1"/><rect x="10" y="4" width="1" height="1"/><rect x="12" y="7" width="1" height="1"/><rect x="9" y="8" width="1" height="1"/><rect x="4" y="9" width="1" height="1"/><rect x="11" y="3" width="1" height="1"/></g></g></svg><span>隨機存取</span></div><div class="tab sel" style="left:106px;top:82px;width:121px;height:23px"><svg class="a" style="left:0px;top:0px" width="16" height="16" viewBox="0 0 16 16"><path d="M1.500 .5h9l4 4v11h-13z" fill="#fff" stroke="#1a1a1a" stroke-width="1"/><path d="M10.500 .5v4h4" fill="#ddd" stroke="#1a1a1a" stroke-width="1"/><path d="M14.500 5v10.500h-12" stroke="#555" fill="none" stroke-width="1" opacity=".5"/><path d="M7.500 2.500c3 0 3 3 1.800 4.800l-.5 2h-2.600l-.5-2c-1.200-1.800-1.200-4.800 1.800-4.800z" fill="#e418e4" stroke="#4a004a" stroke-width=".8"/><circle cx="7.500" cy="12.200" r="1.500" fill="#e418e4" stroke="#4a004a" stroke-width=".8"/></svg><span>檔案基準</span></div><div class="page" style="left:11px;top:104px;width:541px;height:326px"></div><div class="a" style="left:37px;top:129px;width:408px;height:281px;border:2px solid #000;background:linear-gradient(#000 0,#0c0c0c 20%,#242424 60%,#404040 100%)"><svg class="a" style="left:0;top:0" width="404" height="277" shape-rendering="crispEdges"><path d="M0 46.5H404M0 138.5H404M0 230.5H404" stroke="#565656" stroke-width="1" fill="none"/><path d="M13.5 0V277M39.5 0V277M66.5 0V277M93.5 0V277M120.5 0V277M147.5 0V277M174.5 0V277M201.5 0V277M228.5 0V277M255.5 0V277M282.5 0V277M309.5 0V277M336.5 0V277M363.5 0V277M390.5 0V277M0 0.5H404M0 92.5H404M0 184.5H404" stroke="#6e6e6e" stroke-width="1" fill="none"/><defs><linearGradient id="bg" x1="0" y1="0" x2="0" y2="1"><stop offset="0" stop-color="#005a80"/><stop offset=".5" stop-color="#0086b6"/><stop offset="1" stop-color="#00b8f8"/></linearGradient><linearGradient id="og" x1="0" y1="0" x2="0" y2="1"><stop offset="0" stop-color="#7a3c00"/><stop offset=".5" stop-color="#b25a00"/><stop offset="1" stop-color="#f88400"/></linearGradient></defs><rect x="4" y="260" width="9" height="17" fill="url(#bg)"/><rect x="4" y="260" width="1" height="17" fill="#1ec8ff"/><rect x="4" y="260" width="9" height="1" fill="#1ec8ff"/><rect x="12" y="261" width="1" height="16" fill="#004a66" opacity=".55"/><rect x="13" y="263" width="9" height="14" fill="url(#og)"/><rect x="13" y="263" width="1" height="14" fill="#ff9a28"/><rect x="13" y="263" width="9" height="1" fill="#ff9a28"/><rect x="21" y="264" width="1" height="13" fill="#5a2a00" opacity=".55"/><rect x="30" y="244" width="9" height="33" fill="url(#bg)"/><rect x="30" y="244" width="1" height="33" fill="#1ec8ff"/><rect x="30" y="244" width="9" height="1" fill="#1ec8ff"/><rect x="38" y="245" width="1" height="32" fill="#004a66" opacity=".55"/><rect x="39" y="246" width="9" height="31" fill="url(#og)"/><rect x="39" y="246" width="1" height="31" fill="#ff9a28"/><rect x="39" y="246" width="9" height="1" fill="#ff9a28"/><rect x="47" y="247" width="1" height="30" fill="#5a2a00" opacity=".55"/><rect x="57" y="252" width="9" height="25" fill="url(#bg)"/><rect x="57" y="252" width="1" height="25" fill="#1ec8ff"/><rect x="57" y="252" width="9" height="1" fill="#1ec8ff"/><rect x="65" y="253" width="1" height="24" fill="#004a66" opacity=".55"/><rect x="66" y="220" width="9" height="57" fill="url(#og)"/><rect x="66" y="220" width="1" height="57" fill="#ff9a28"/><rect x="66" y="220" width="9" height="1" fill="#ff9a28"/><rect x="74" y="221" width="1" height="56" fill="#5a2a00" opacity=".55"/><rect x="84" y="169" width="9" height="108" fill="url(#bg)"/><rect x="84" y="169" width="1" height="108" fill="#1ec8ff"/><rect x="84" y="169" width="9" height="1" fill="#1ec8ff"/><rect x="92" y="170" width="1" height="107" fill="#004a66" opacity=".55"/><rect x="93" y="177" width="9" height="100" fill="url(#og)"/><rect x="93" y="177" width="1" height="100" fill="#ff9a28"/><rect x="93" y="177" width="9" height="1" fill="#ff9a28"/><rect x="101" y="178" width="1" height="99" fill="#5a2a00" opacity=".55"/><rect x="111" y="100" width="9" height="177" fill="url(#bg)"/><rect x="111" y="100" width="1" height="177" fill="#1ec8ff"/><rect x="111" y="100" width="9" height="1" fill="#1ec8ff"/><rect x="119" y="101" width="1" height="176" fill="#004a66" opacity=".55"/><rect x="120" y="115" width="9" height="162" fill="url(#og)"/><rect x="120" y="115" width="1" height="162" fill="#ff9a28"/><rect x="120" y="115" width="9" height="1" fill="#ff9a28"/><rect x="128" y="116" width="1" height="161" fill="#5a2a00" opacity=".55"/><rect x="138" y="33" width="9" height="244" fill="url(#bg)"/><rect x="138" y="33" width="1" height="244" fill="#1ec8ff"/><rect x="138" y="33" width="9" height="1" fill="#1ec8ff"/><rect x="146" y="34" width="1" height="243" fill="#004a66" opacity=".55"/><rect x="147" y="48" width="9" height="229" fill="url(#og)"/><rect x="147" y="48" width="1" height="229" fill="#ff9a28"/><rect x="147" y="48" width="9" height="1" fill="#ff9a28"/><rect x="155" y="49" width="1" height="228" fill="#5a2a00" opacity=".55"/><rect x="165" y="33" width="9" height="244" fill="url(#bg)"/><rect x="165" y="33" width="1" height="244" fill="#1ec8ff"/><rect x="165" y="33" width="9" height="1" fill="#1ec8ff"/><rect x="173" y="34" width="1" height="243" fill="#004a66" opacity=".55"/><rect x="174" y="42" width="9" height="235" fill="url(#og)"/><rect x="174" y="42" width="1" height="235" fill="#ff9a28"/><rect x="174" y="42" width="9" height="1" fill="#ff9a28"/><rect x="182" y="43" width="1" height="234" fill="#5a2a00" opacity=".55"/><rect x="192" y="112" width="9" height="165" fill="url(#bg)"/><rect x="192" y="112" width="1" height="165" fill="#1ec8ff"/><rect x="192" y="112" width="9" height="1" fill="#1ec8ff"/><rect x="200" y="113" width="1" height="164" fill="#004a66" opacity=".55"/><rect x="201" y="42" width="9" height="235" fill="url(#og)"/><rect x="201" y="42" width="1" height="235" fill="#ff9a28"/><rect x="201" y="42" width="9" height="1" fill="#ff9a28"/><rect x="209" y="43" width="1" height="234" fill="#5a2a00" opacity=".55"/><rect x="219" y="32" width="9" height="245" fill="url(#bg)"/><rect x="219" y="32" width="1" height="245" fill="#1ec8ff"/><rect x="219" y="32" width="9" height="1" fill="#1ec8ff"/><rect x="227" y="33" width="1" height="244" fill="#004a66" opacity=".55"/><rect x="228" y="39" width="9" height="238" fill="url(#og)"/><rect x="228" y="39" width="1" height="238" fill="#ff9a28"/><rect x="228" y="39" width="9" height="1" fill="#ff9a28"/><rect x="236" y="40" width="1" height="237" fill="#5a2a00" opacity=".55"/><rect x="246" y="31" width="9" height="246" fill="url(#bg)"/><rect x="246" y="31" width="1" height="246" fill="#1ec8ff"/><rect x="246" y="31" width="9" height="1" fill="#1ec8ff"/><rect x="254" y="32" width="1" height="245" fill="#004a66" opacity=".55"/><rect x="255" y="39" width="9" height="238" fill="url(#og)"/><rect x="255" y="39" width="1" height="238" fill="#ff9a28"/><rect x="255" y="39" width="9" height="1" fill="#ff9a28"/><rect x="263" y="40" width="1" height="237" fill="#5a2a00" opacity=".55"/><rect x="273" y="30" width="9" height="247" fill="url(#bg)"/><rect x="273" y="30" width="1" height="247" fill="#1ec8ff"/><rect x="273" y="30" width="9" height="1" fill="#1ec8ff"/><rect x="281" y="31" width="1" height="246" fill="#004a66" opacity=".55"/><rect x="282" y="33" width="9" height="244" fill="url(#og)"/><rect x="282" y="33" width="1" height="244" fill="#ff9a28"/><rect x="282" y="33" width="9" height="1" fill="#ff9a28"/><rect x="290" y="34" width="1" height="243" fill="#5a2a00" opacity=".55"/><rect x="300" y="28" width="9" height="249" fill="url(#bg)"/><rect x="300" y="28" width="1" height="249" fill="#1ec8ff"/><rect x="300" y="28" width="9" height="1" fill="#1ec8ff"/><rect x="308" y="29" width="1" height="248" fill="#004a66" opacity=".55"/><rect x="309" y="35" width="9" height="242" fill="url(#og)"/><rect x="309" y="35" width="1" height="242" fill="#ff9a28"/><rect x="309" y="35" width="9" height="1" fill="#ff9a28"/><rect x="317" y="36" width="1" height="241" fill="#5a2a00" opacity=".55"/><rect x="327" y="30" width="9" height="247" fill="url(#bg)"/><rect x="327" y="30" width="1" height="247" fill="#1ec8ff"/><rect x="327" y="30" width="9" height="1" fill="#1ec8ff"/><rect x="335" y="31" width="1" height="246" fill="#004a66" opacity=".55"/><rect x="336" y="31" width="9" height="246" fill="url(#og)"/><rect x="336" y="31" width="1" height="246" fill="#ff9a28"/><rect x="336" y="31" width="9" height="1" fill="#ff9a28"/><rect x="344" y="32" width="1" height="245" fill="#5a2a00" opacity=".55"/><rect x="354" y="21" width="9" height="256" fill="url(#bg)"/><rect x="354" y="21" width="1" height="256" fill="#1ec8ff"/><rect x="354" y="21" width="9" height="1" fill="#1ec8ff"/><rect x="362" y="22" width="1" height="255" fill="#004a66" opacity=".55"/><rect x="363" y="34" width="9" height="243" fill="url(#og)"/><rect x="363" y="34" width="1" height="243" fill="#ff9a28"/><rect x="363" y="34" width="9" height="1" fill="#ff9a28"/><rect x="371" y="35" width="1" height="242" fill="#5a2a00" opacity=".55"/><rect x="381" y="27" width="9" height="250" fill="url(#bg)"/><rect x="381" y="27" width="1" height="250" fill="#1ec8ff"/><rect x="381" y="27" width="9" height="1" fill="#1ec8ff"/><rect x="389" y="28" width="1" height="249" fill="#004a66" opacity=".55"/><rect x="390" y="43" width="9" height="234" fill="url(#og)"/><rect x="390" y="43" width="1" height="234" fill="#ff9a28"/><rect x="390" y="43" width="9" height="1" fill="#ff9a28"/><rect x="398" y="44" width="1" height="233" fill="#5a2a00" opacity=".55"/><path d="M13.5 0V277M39.5 0V277M66.5 0V277M93.5 0V277M120.5 0V277M147.5 0V277M174.5 0V277M201.5 0V277M228.5 0V277M255.5 0V277M282.5 0V277M309.5 0V277M336.5 0V277M363.5 0V277M390.5 0V277" stroke="#5c5c5c" stroke-width="1" fill="none"/></svg></div><div class="a" style="left:52px;top:410px;width:1px;height:4px;background:#707070"></div><div class="a" style="left:78px;top:410px;width:1px;height:4px;background:#707070"></div><div class="a" style="left:105px;top:410px;width:1px;height:4px;background:#707070"></div><div class="a" style="left:132px;top:410px;width:1px;height:4px;background:#707070"></div><div class="a" style="left:159px;top:410px;width:1px;height:4px;background:#707070"></div><div class="a" style="left:186px;top:410px;width:1px;height:4px;background:#707070"></div><div class="a" style="left:213px;top:410px;width:1px;height:4px;background:#707070"></div><div class="a" style="left:240px;top:410px;width:1px;height:4px;background:#707070"></div><div class="a" style="left:267px;top:410px;width:1px;height:4px;background:#707070"></div><div class="a" style="left:294px;top:410px;width:1px;height:4px;background:#707070"></div><div class="a" style="left:321px;top:410px;width:1px;height:4px;background:#707070"></div><div class="a" style="left:348px;top:410px;width:1px;height:4px;background:#707070"></div><div class="a" style="left:375px;top:410px;width:1px;height:4px;background:#707070"></div><div class="a" style="left:402px;top:410px;width:1px;height:4px;background:#707070"></div><div class="a" style="left:429px;top:410px;width:1px;height:4px;background:#707070"></div><div class="ax" style="left:32.5px;top:415px;width:40px;text-align:center">0.5</div><div class="ax" style="left:59.42999999999995px;top:415px;width:40px;text-align:center">1</div><div class="ax" style="left:86.36000000000001px;top:415px;width:40px;text-align:center">2</div><div class="ax" style="left:113.28999999999996px;top:415px;width:40px;text-align:center">4</div><div class="ax" style="left:140.22000000000003px;top:415px;width:40px;text-align:center">8</div><div class="ax" style="left:167.14999999999998px;top:415px;width:40px;text-align:center">16</div><div class="ax" style="left:194.07999999999993px;top:415px;width:40px;text-align:center">32</div><div class="ax" style="left:221.01px;top:415px;width:40px;text-align:center">64</div><div class="ax" style="left:247.94000000000005px;top:415px;width:40px;text-align:center">128</div><div class="ax" style="left:274.87px;top:415px;width:40px;text-align:center">256</div><div class="ax" style="left:301.79999999999995px;top:415px;width:40px;text-align:center">512</div><div class="ax" style="left:328.73px;top:415px;width:40px;text-align:center">1024</div><div class="ax" style="left:355.65999999999997px;top:415px;width:40px;text-align:center">2048</div><div class="ax" style="left:382.5899999999999px;top:415px;width:40px;text-align:center">4096</div><div class="ax" style="left:409.52px;top:415px;width:40px;text-align:center">8192</div><div class="ax" style="left:-6px;top:126px;width:40px;text-align:right">150</div><div class="ax" style="left:-6px;top:217px;width:40px;text-align:right">100</div><div class="ax" style="left:-6px;top:309px;width:40px;text-align:right">50</div><div class="ax" style="left:39px;top:115px">MB/<b>秒</b></div><div class="a" style="left:359px;top:118px;width:9px;height:9px;background:linear-gradient(#1090c8,#00b0f0);border:1px solid #20b8f0"></div><div class="lbl" style="left:372px;top:115px">已讀</div><div class="a" style="left:407px;top:118px;width:9px;height:9px;background:linear-gradient(#b85c00,#e87800);border:1px solid #f08a20"></div><div class="lbl" style="left:419px;top:115px">寫入</div><div class="btn zh" style="left:466px;top:118px;width:73px;height:19px;line-height:16px">開始</div><div class="lbl" style="left:465px;top:150px">磁碟</div><div class="combo" style="left:465px;top:168px;width:75px;height:20px;line-height:17px;padding-left:3px">F:<b></b></div><div class="lbl" style="left:465px;top:215px">檔案長度</div><div class="combo" style="left:465px;top:234px;width:75px;height:20px;line-height:17px;padding-left:3px">64 MB<b></b></div><div class="lbl" style="left:465px;top:282px">延遲</div><div class="a lbl" style="left:465px;top:301px;width:54px;height:18px;border:1px solid #d0d8e0;border-top-color:#b8c0c8;background:#fff;line-height:16px;padding-left:2px;font-family:'Liberation Sans',sans-serif;font-size:11px">0</div><div class="a" style="left:520px;top:302px;width:15px;height:8px;border:1px solid #a8b0b8;background:#f4f4f4"></div><div class="a" style="left:524px;top:304px;width:0;height:0;border-left:3px solid transparent;border-right:3px solid transparent;border-bottom:3px solid #3a5a9a"></div><div class="a" style="left:520px;top:311px;width:15px;height:8px;border:1px solid #a8b0b8;background:#f4f4f4"></div><div class="a" style="left:524px;top:314px;width:0;height:0;border-left:3px solid transparent;border-right:3px solid transparent;border-top:3px solid #3a5a9a"></div></div></div><div class="win" style="left:3px;top:469px;width:578px;height:464px"><div class="tbar"></div><div class="glow"></div><div class="edge"></div><svg class="a" style="left:6px;top:6px" width="18" height="18" viewBox="0 0 18 18"><path d="M10.300 .8L16.600 6L7 16.200L.9 9.400Z" fill="#7f95a5" stroke="#c4d2dc" stroke-width=".9" stroke-linejoin="round"/><path d="M1.500 9.800L7 15.600L9 13.500L3.500 8Z" fill="#5a7282"/><path d="M2.500 9L5 6.500" stroke="#e8f0f4" stroke-width="1.300"/><circle cx="9.800" cy="6.500" r="3.900" fill="#e2bca4"/><circle cx="9" cy="5.500" r="1.800" fill="#eccdb8"/></svg><div class="ttl">HD Tune Pro 3.50 - 硬碟檢測-維護工具</div><div class="capb" style="left:469px;width:104px"><i style="left:27px"></i><i style="left:54px"></i><svg class="a" style="left:0;top:0" width="104" height="19"><rect x="9" y="10" width="10" height="3" fill="#fff"/><rect x="37.500" y="5.500" width="8" height="6" fill="none" stroke="#fff" stroke-width="2"/><path d="M74 5l8 8M82 5l-8 8" stroke="#fff" stroke-width="2.600"/></svg></div><div class="cliB" style="left:5px;top:27px;width:568px;height:432px"></div><div class="cliB2" style="left:6px;top:28px;width:566px;height:430px"></div><div class="cli" style="width:564px;height:428px"><div class="menu"><span style="left:8px">檔案(<u>F</u>)</span><span style="left:64px">說明(<u>H</u>)</span></div><div class="tool"></div><div class="sep"></div><div class="combo" style="left:12px;top:28px;width:224px;height:20px;line-height:17px;padding-left:2px;font-size:12px;letter-spacing:-.12px">ST32000641AS (2000 GB)<b></b></div><svg class="a" style="left:241px;top:29px" width="11" height="20" viewBox="0 0 11 20"><g shape-rendering="crispEdges"><rect x="3" y="1" width="5" height="14" fill="#222"/><rect x="3" y="1" width="1" height="13" fill="#b0b0b0"/><rect x="4" y="1" width="3" height="13" fill="#e81010"/><rect x="4" y="1" width="2" height="3" fill="#20d8e8"/></g><circle cx="5.500" cy="15" r="3.800" fill="#e81010" stroke="#333" stroke-width=".8"/><circle cx="4.300" cy="14.200" r="1" fill="#ffd0d0"/></svg><div class="lbl" style="left:255px;top:31px;font-weight:bold;font-size:13px;line-height:16px">48蚓</div><div class="btn" style="left:342px;top:26px;width:27px;height:24px"><svg class="a" style="left:3px;top:2px" width="18" height="18" viewBox="0 0 18 18"><path d="M2.500 1.500h5l3 3v9h-8z" fill="#fff" stroke="#1a1a1a" stroke-width="1"/><path d="M7.500 1.500v3h3" fill="none" stroke="#1a1a1a" stroke-width="1"/><path d="M8.500 3.500h5l3 3v9.500h-8z" fill="#fff" stroke="#1a1a1a" stroke-width="1"/><path d="M13.500 3.500v3h3" fill="none" stroke="#1a1a1a" stroke-width="1"/><path d="M16.500 7v9.500h-7.500" fill="none" stroke="#666" stroke-width="1" opacity=".6"/><g shape-rendering="crispEdges" fill="#1e8cff"><rect x="4" y="5" width="4" height="1"/><rect x="4" y="7" width="4" height="1"/><rect x="4" y="9" width="4" height="1"/><rect x="10" y="8" width="5" height="1"/><rect x="10" y="10" width="5" height="1"/><rect x="10" y="12" width="5" height="1"/></g></svg></div><div class="btn" style="left:372px;top:26px;width:27px;height:24px"><svg class="a" style="left:3px;top:2px" width="18" height="18" viewBox="0 0 18 18"><path d="M2.500 1.500h5l3 3v9h-8z" fill="#fff" stroke="#1a1a1a" stroke-width="1"/><path d="M7.500 1.500v3h3" fill="none" stroke="#1a1a1a" stroke-width="1"/><path d="M8.500 3.500h5l3 3v9.500h-8z" fill="#fff" stroke="#1a1a1a" stroke-width="1"/><path d="M13.500 3.500v3h3" fill="none" stroke="#1a1a1a" stroke-width="1"/><path d="M16.500 7v9.500h-7.500" fill="none" stroke="#666" stroke-width="1" opacity=".6"/><g shape-rendering="crispEdges"><rect x="4" y="5" width="4" height="5" fill="#18c838"/><rect x="4" y="5" width="2" height="2" fill="#2a6cf0"/><rect x="6" y="7" width="2" height="2" fill="#e03818"/><rect x="10" y="8" width="5" height="6" fill="#18c838"/><rect x="10" y="8" width="2" height="2" fill="#2a6cf0"/><rect x="12" y="10" width="2" height="2" fill="#e03818"/></g></svg></div><div class="btn" style="left:402px;top:26px;width:27px;height:24px"><svg class="a" style="left:3px;top:2px" width="18" height="18" viewBox="0 0 18 18"><g shape-rendering="crispEdges"><rect x="2" y="2" width="15" height="15" fill="#222"/><rect x="2" y="2" width="14" height="14" fill="#2a3ce8"/><rect x="4" y="2" width="10" height="7" fill="#d0d0d0"/><rect x="5" y="3" width="8" height="1" fill="#888"/><rect x="5" y="5" width="8" height="1" fill="#888"/><rect x="5" y="7" width="8" height="1" fill="#888"/><rect x="5" y="11" width="8" height="5" fill="#b0b0b0"/><rect x="10" y="12" width="2" height="3" fill="#333"/></g></svg></div><div class="btn" style="left:432px;top:26px;width:27px;height:24px"><svg class="a" style="left:3px;top:2px" width="18" height="18" viewBox="0 0 18 18"><path d="M11.3 6.0L9.7 7.3L9.9 9.4L7.8 9.2L6.5 10.8L5.2 9.2L3.1 9.4L3.3 7.3L1.7 6.0L3.3 4.7L3.1 2.6L5.2 2.8L6.5 1.2L7.8 2.8L9.9 2.6L9.7 4.7Z" fill="#f0e010" stroke="#4a4400" stroke-width=".9"/><circle cx="6.5" cy="6" r="1.5" fill="#8a8a70" stroke="#333" stroke-width=".6"/><path d="M16.3 11.5L14.7 12.8L14.9 14.9L12.8 14.7L11.5 16.3L10.2 14.7L8.1 14.9L8.3 12.8L6.7 11.5L8.3 10.2L8.1 8.1L10.2 8.3L11.5 6.7L12.8 8.3L14.9 8.1L14.7 10.2Z" fill="#f0e010" stroke="#4a4400" stroke-width=".9"/><circle cx="11.5" cy="11.5" r="1.5" fill="#8a8a70" stroke="#333" stroke-width=".6"/></svg></div><div class="btn" style="left:466px;top:26px;width:27px;height:24px"><svg class="a" style="left:3px;top:1px" width="19" height="19" viewBox="0 0 19 19"><defs><linearGradient id="mg" x1="0" y1="0" x2="1" y2="1"><stop offset="0" stop-color="#d428d4"/><stop offset=".5" stop-color="#b010b0"/><stop offset="1" stop-color="#8a008a"/></linearGradient></defs><rect x="0" y="0" width="19" height="19" rx="1.500" fill="url(#mg)"/><path d="M.5 18.500v-18h18" fill="none" stroke="#e860e8" stroke-width="1"/><path d="M9.500 3v11" fill="none" stroke="#fff" stroke-width="2.200"/><path d="M4.500 10.500l5 5.500 5-5.500z" fill="#fff" stroke="#fff" stroke-width="1" stroke-linejoin="miter"/></svg></div><div class="btn zh" style="left:501px;top:26px;width:53px;height:24px;line-height:21px">離開</div><div class="tab" style="left:13px;top:65px;width:107px;height:20px"><svg class="a" style="left:0px;top:0px" width="16" height="16" viewBox="0 0 16 16"><path d="M8 .7c4.200 0 4.400 4.300 2.600 7l-.8 2.800h-3.600l-.8-2.800c-1.800-2.700-1.600-7 2.600-7z" fill="#f2ea0c" stroke="#4e4a00" stroke-width="1"/><circle cx="8" cy="13.300" r="1.900" fill="#f2ea0c" stroke="#4e4a00" stroke-width="1"/><path d="M6.300 2.500c-1 1-1 2.500-.4 3.800" stroke="#fffcb0" stroke-width="1" fill="none"/></svg><span>標準測試</span></div><div class="tab" style="left:122px;top:65px;width:106px;height:20px"><svg class="a" style="left:0px;top:0px" width="16" height="16" viewBox="0 0 16 16"><circle cx="8" cy="3" r="2.500" fill="#38b0ff" stroke="#00307a" stroke-width=".9"/><path d="M4.500 6.500h6v6.500h2v2.500h-9v-2.500h2.500v-4h-1.500z" fill="#1464f4" stroke="#001a70" stroke-width=".9"/><path d="M9.500 7v6.500h2" stroke="#0a2a9a" stroke-width="1" fill="none"/></svg><span>硬碟資訊</span></div><div class="tab" style="left:229px;top:65px;width:84px;height:20px"><svg class="a" style="left:0px;top:0px" width="16" height="16" viewBox="0 0 16 16"><path d="M5.500 .8h5v4.700h4.700v5h-4.700v4.700h-5v-4.700h-4.700v-5h4.700z" fill="#ee1c1c" stroke="#7a0000" stroke-width="1"/><path d="M10 1.500v4.500h4.500M10 10.500v4.200" stroke="#a80808" stroke-width="1" fill="none"/></svg><span>健康</span></div><div class="tab" style="left:314px;top:65px;width:107px;height:20px"><svg class="a" style="left:0px;top:0px" width="16" height="16" viewBox="0 0 16 16"><path d="M9.500 9.500l5 5" stroke="#1a2a9a" stroke-width="3.200" stroke-linecap="round"/><circle cx="6" cy="6" r="4.800" fill="#30d048" stroke="#1e5a2a" stroke-width="1.200"/><circle cx="4.600" cy="4.400" r="1.700" fill="#c0ffc8"/></svg><span>錯誤掃瞄</span></div><div class="tab" style="left:422px;top:65px;width:129px;height:20px"><svg class="a" style="left:0px;top:0px" width="16" height="16" viewBox="0 0 16 16"><path d="M1 3.500l1.500-2.500h4l1.500 2h6.500v12h-13.500z" fill="#d8b010" stroke="#5a4400" stroke-width="1"/><path d="M3 5h11.500v9.500h-11.500z" fill="#f6dc48" stroke="#7a5e00" stroke-width=".8"/><path d="M4 6v8" stroke="#fff6b0" stroke-width="1"/></svg><span>資料夾使用率</span></div><div class="tab" style="left:13px;top:85px;width:94px;height:20px"><svg class="a" style="left:0px;top:0px" width="16" height="16" viewBox="0 0 16 16"><g shape-rendering="crispEdges"><rect x="5" y="0" width="5" height="2" fill="#222"/><rect x="1" y="1" width="13" height="3" fill="#2a2a2a"/><rect x="2" y="4" width="11" height="12" fill="#3c3c3c"/><rect x="3" y="4" width="2" height="11" fill="#8a8a8a"/><rect x="5" y="4" width="2" height="11" fill="#c8c8c8"/><rect x="7" y="4" width="1" height="11" fill="#777"/><rect x="9" y="4" width="2" height="11" fill="#666"/></g></svg><span>清除</span></div><div class="tab" style="left:108px;top:85px;width:117px;height:20px"><svg class="a" style="left:0px;top:0px" width="16" height="16" viewBox="0 0 16 16"><path d="M1.500 .5h9l4 4v11h-13z" fill="#fff" stroke="#1a1a1a" stroke-width="1"/><path d="M10.500 .5v4h4" fill="#ddd" stroke="#1a1a1a" stroke-width="1"/><path d="M14.500 5v10.500h-12" stroke="#555" fill="none" stroke-width="1" opacity=".5"/><path d="M7.500 2.500c3 0 3 3 1.800 4.800l-.5 2h-2.600l-.5-2c-1.200-1.800-1.200-4.800 1.800-4.800z" fill="#e418e4" stroke="#4a004a" stroke-width=".8"/><circle cx="7.500" cy="12.200" r="1.500" fill="#e418e4" stroke="#4a004a" stroke-width=".8"/></svg><span>檔案基準</span></div><div class="tab" style="left:226px;top:85px;width:117px;height:20px"><svg class="a" style="left:0px;top:0px" width="16" height="16" viewBox="0 0 16 16"><g shape-rendering="crispEdges"><rect x="0" y="0" width="16" height="16" fill="#333"/><rect x="1" y="1" width="14" height="14" fill="#fbf6c0"/><rect x="1" y="9" width="3" height="6" fill="#10c028"/><rect x="4" y="11" width="2" height="4" fill="#1838e8"/><rect x="6" y="6" width="3" height="9" fill="#10c028"/><rect x="9" y="9" width="2" height="6" fill="#1838e8"/><rect x="11" y="7" width="2" height="8" fill="#10c028"/><rect x="13" y="10" width="2" height="5" fill="#1838e8"/></g></svg><span>磁碟監視</span></div><div class="tab" style="left:343px;top:85px;width:92px;height:20px"><svg class="a" style="left:0px;top:0px" width="16" height="16" viewBox="0 0 16 16"><path d="M1 5.500h3.500l5-4.500v14l-5-4.500h-3.500z" fill="#f0d418" stroke="#3a2e00" stroke-width="1"/><path d="M7.500 3.500v9" stroke="#8a7400" stroke-width="1.500"/><path d="M11.500 5q2 3 0 6M13.500 3.500q3 4.500 0 9" stroke="#222" stroke-width="1.100" fill="none"/></svg><span>工具</span></div><div class="tab sel" style="left:433px;top:82px;width:120px;height:23px"><svg class="a" style="left:0px;top:0px" width="16" height="16" viewBox="0 0 16 16"><g shape-rendering="crispEdges"><rect x="0" y="0" width="16" height="16" fill="#444"/><rect x="1" y="1" width="14" height="14" fill="#fbf3b0"/><g fill="#e02020"><rect x="3" y="11" width="1" height="1"/><rect x="6" y="12" width="1" height="1"/><rect x="9" y="10" width="1" height="1"/><rect x="12" y="12" width="1" height="1"/><rect x="5" y="9" width="1" height="1"/><rect x="2" y="13" width="1" height="1"/></g><g fill="#2040e0"><rect x="7" y="6" width="1" height="1"/><rect x="10" y="4" width="1" height="1"/><rect x="12" y="7" width="1" height="1"/><rect x="9" y="8" width="1" height="1"/><rect x="4" y="9" width="1" height="1"/><rect x="11" y="3" width="1" height="1"/></g></g></svg><span>隨機存取</span></div><div class="page" style="left:11px;top:104px;width:541px;height:340px"></div><div class="a" style="left:46px;top:118px;width:392px;height:188px;border:2px solid #000;border-right-width:1px;background:linear-gradient(#000 0,#0c0c0c 20%,#242424 60%,#404040 100%)"><svg class="a" style="left:0;top:0" width="389" height="184" shape-rendering="crispEdges"><path d="M19.5 0V184M58.5 0V184M97.5 0V184M135.5 0V184M174.5 0V184M213.5 0V184M252.5 0V184M291.5 0V184M329.5 0V184M368.5 0V184M0 10.5H389M0 28.5H389M0 46.5H389M0 65.5H389M0 83.5H389M0 101.5H389M0 120.5H389M0 138.5H389M0 157.5H389M0 175.5H389" stroke="#4a4a4a" stroke-width="1" fill="none"/><path d="M0.5 0V184M38.5 0V184M77.5 0V184M116.5 0V184M155.5 0V184M194.5 0V184M232.5 0V184M271.5 0V184M310.5 0V184M349.5 0V184M388.5 0V184M0 19.5H389M0 37.5H389M0 55.5H389M0 74.5H389M0 92.5H389M0 111.5H389M0 129.5H389M0 148.5H389M0 166.5H389" stroke="#6a6a6a" stroke-width="1" fill="none"/><path d="M0 183h1v1h-1zM0 182h1v1h-1zM0 181h1v1h-1zM0 180h1v1h-1zM0 179h1v1h-1zM0 178h1v1h-1zM0 177h1v1h-1zM0 176h1v1h-1zM0 175h1v1h-1zM1 183h1v1h-1zM1 182h1v1h-1zM1 181h1v1h-1zM1 180h1v1h-1zM1 179h1v1h-1zM1 178h1v1h-1zM1 177h1v1h-1zM2 183h1v1h-1zM2 182h1v1h-1zM2 181h1v1h-1zM2 180h1v1h-1zM2 179h1v1h-1zM2 178h1v1h-1zM2 176h1v1h-1zM3 183h1v1h-1zM3 182h1v1h-1zM3 181h1v1h-1zM3 180h1v1h-1zM3 179h1v1h-1zM3 178h1v1h-1zM4 183h1v1h-1zM4 180h1v1h-1zM4 178h1v1h-1zM4 177h1v1h-1zM5 183h1v1h-1zM5 182h1v1h-1zM5 181h1v1h-1zM5 180h1v1h-1zM5 179h1v1h-1zM5 178h1v1h-1zM5 177h1v1h-1zM5 176h1v1h-1zM6 183h1v1h-1zM6 182h1v1h-1zM6 181h1v1h-1zM6 180h1v1h-1zM6 179h1v1h-1zM6 178h1v1h-1zM6 177h1v1h-1zM7 183h1v1h-1zM7 182h1v1h-1zM7 181h1v1h-1zM7 180h1v1h-1zM7 179h1v1h-1zM7 178h1v1h-1zM8 183h1v1h-1zM8 182h1v1h-1zM8 181h1v1h-1zM8 179h1v1h-1zM8 178h1v1h-1zM9 183h1v1h-1zM9 182h1v1h-1zM9 181h1v1h-1zM9 180h1v1h-1zM9 179h1v1h-1zM10 183h1v1h-1zM10 181h1v1h-1zM10 180h1v1h-1zM10 179h1v1h-1zM10 178h1v1h-1zM10 177h1v1h-1zM11 183h1v1h-1zM11 182h1v1h-1zM11 181h1v1h-1zM11 180h1v1h-1zM11 179h1v1h-1zM11 178h1v1h-1zM11 176h1v1h-1zM12 183h1v1h-1zM12 182h1v1h-1zM12 181h1v1h-1zM12 180h1v1h-1zM12 179h1v1h-1zM12 178h1v1h-1zM12 176h1v1h-1zM13 183h1v1h-1zM13 182h1v1h-1zM13 181h1v1h-1zM13 180h1v1h-1zM13 179h1v1h-1zM13 178h1v1h-1zM13 177h1v1h-1zM14 183h1v1h-1zM14 182h1v1h-1zM14 181h1v1h-1zM14 180h1v1h-1zM14 179h1v1h-1zM15 183h1v1h-1zM15 182h1v1h-1zM15 181h1v1h-1zM15 180h1v1h-1zM15 179h1v1h-1zM15 178h1v1h-1zM15 177h1v1h-1zM15 176h1v1h-1zM16 183h1v1h-1zM16 182h1v1h-1zM16 181h1v1h-1zM16 180h1v1h-1zM16 179h1v1h-1zM16 178h1v1h-1zM17 183h1v1h-1zM17 182h1v1h-1zM17 181h1v1h-1zM17 180h1v1h-1zM17 179h1v1h-1zM17 178h1v1h-1zM18 183h1v1h-1zM18 182h1v1h-1zM18 181h1v1h-1zM18 180h1v1h-1zM18 179h1v1h-1zM18 178h1v1h-1zM18 177h1v1h-1zM19 183h1v1h-1zM19 182h1v1h-1zM19 181h1v1h-1zM19 180h1v1h-1zM20 183h1v1h-1zM20 182h1v1h-1zM20 181h1v1h-1zM20 180h1v1h-1zM20 179h1v1h-1zM20 178h1v1h-1zM20 176h1v1h-1zM20 175h1v1h-1zM21 183h1v1h-1zM21 182h1v1h-1zM21 181h1v1h-1zM21 180h1v1h-1zM21 179h1v1h-1zM21 178h1v1h-1zM21 177h1v1h-1zM21 176h1v1h-1zM22 183h1v1h-1zM22 182h1v1h-1zM22 181h1v1h-1zM22 179h1v1h-1zM22 178h1v1h-1zM22 177h1v1h-1zM22 176h1v1h-1zM23 183h1v1h-1zM23 182h1v1h-1zM23 181h1v1h-1zM23 180h1v1h-1zM23 179h1v1h-1zM23 178h1v1h-1zM23 175h1v1h-1zM24 183h1v1h-1zM24 182h1v1h-1zM24 180h1v1h-1zM24 179h1v1h-1zM24 178h1v1h-1zM24 176h1v1h-1zM25 183h1v1h-1zM25 182h1v1h-1zM25 181h1v1h-1zM25 180h1v1h-1zM25 179h1v1h-1zM25 178h1v1h-1zM26 183h1v1h-1zM26 182h1v1h-1zM26 181h1v1h-1zM26 180h1v1h-1zM26 179h1v1h-1zM26 178h1v1h-1zM27 183h1v1h-1zM27 182h1v1h-1zM27 181h1v1h-1zM27 180h1v1h-1zM27 179h1v1h-1zM28 183h1v1h-1zM28 182h1v1h-1zM28 181h1v1h-1zM28 180h1v1h-1zM28 179h1v1h-1zM28 178h1v1h-1zM28 177h1v1h-1zM29 183h1v1h-1zM29 182h1v1h-1zM29 181h1v1h-1zM29 180h1v1h-1zM29 179h1v1h-1zM29 178h1v1h-1zM29 177h1v1h-1zM30 183h1v1h-1zM30 182h1v1h-1zM30 181h1v1h-1zM30 180h1v1h-1zM30 179h1v1h-1zM31 183h1v1h-1zM31 182h1v1h-1zM31 181h1v1h-1zM31 180h1v1h-1zM31 179h1v1h-1zM31 178h1v1h-1zM31 177h1v1h-1zM31 176h1v1h-1zM32 183h1v1h-1zM32 182h1v1h-1zM32 181h1v1h-1zM32 180h1v1h-1zM32 179h1v1h-1zM32 178h1v1h-1zM32 177h1v1h-1zM33 183h1v1h-1zM33 182h1v1h-1zM33 181h1v1h-1zM33 180h1v1h-1zM33 177h1v1h-1zM34 183h1v1h-1zM34 182h1v1h-1zM34 181h1v1h-1zM34 180h1v1h-1zM34 178h1v1h-1zM35 183h1v1h-1zM35 182h1v1h-1zM35 181h1v1h-1zM35 180h1v1h-1zM35 179h1v1h-1zM35 177h1v1h-1zM35 176h1v1h-1zM36 183h1v1h-1zM36 182h1v1h-1zM36 181h1v1h-1zM36 180h1v1h-1zM37 183h1v1h-1zM37 181h1v1h-1zM37 180h1v1h-1zM37 179h1v1h-1zM37 178h1v1h-1zM38 183h1v1h-1zM38 182h1v1h-1zM38 181h1v1h-1zM38 180h1v1h-1zM38 179h1v1h-1zM38 178h1v1h-1zM38 177h1v1h-1zM38 176h1v1h-1zM39 183h1v1h-1zM39 182h1v1h-1zM39 181h1v1h-1zM39 180h1v1h-1zM39 179h1v1h-1zM39 178h1v1h-1zM39 176h1v1h-1zM40 183h1v1h-1zM40 182h1v1h-1zM40 181h1v1h-1zM40 180h1v1h-1zM40 179h1v1h-1zM40 178h1v1h-1zM40 177h1v1h-1zM40 176h1v1h-1zM40 175h1v1h-1zM41 183h1v1h-1zM41 182h1v1h-1zM41 181h1v1h-1zM41 180h1v1h-1zM41 179h1v1h-1zM41 177h1v1h-1zM41 176h1v1h-1zM42 183h1v1h-1zM42 182h1v1h-1zM42 181h1v1h-1zM42 180h1v1h-1zM43 183h1v1h-1zM43 182h1v1h-1zM43 181h1v1h-1zM43 180h1v1h-1zM43 178h1v1h-1zM43 177h1v1h-1zM44 183h1v1h-1zM44 181h1v1h-1zM44 180h1v1h-1zM44 179h1v1h-1zM44 177h1v1h-1zM45 183h1v1h-1zM45 182h1v1h-1zM45 181h1v1h-1zM45 180h1v1h-1zM45 178h1v1h-1zM46 183h1v1h-1zM46 182h1v1h-1zM46 181h1v1h-1zM46 180h1v1h-1zM46 179h1v1h-1zM46 178h1v1h-1zM47 183h1v1h-1zM47 181h1v1h-1zM47 180h1v1h-1zM47 178h1v1h-1zM48 183h1v1h-1zM48 182h1v1h-1zM48 181h1v1h-1zM48 180h1v1h-1zM48 179h1v1h-1zM48 178h1v1h-1zM48 176h1v1h-1zM49 183h1v1h-1zM49 182h1v1h-1zM49 181h1v1h-1zM49 180h1v1h-1zM49 177h1v1h-1zM50 183h1v1h-1zM50 182h1v1h-1zM50 181h1v1h-1zM50 180h1v1h-1zM50 179h1v1h-1zM50 177h1v1h-1zM51 183h1v1h-1zM51 182h1v1h-1zM51 181h1v1h-1zM51 180h1v1h-1zM51 179h1v1h-1zM51 178h1v1h-1zM52 183h1v1h-1zM52 182h1v1h-1zM52 181h1v1h-1zM52 180h1v1h-1zM52 179h1v1h-1zM52 177h1v1h-1zM53 183h1v1h-1zM53 182h1v1h-1zM53 181h1v1h-1zM53 180h1v1h-1zM53 178h1v1h-1zM54 183h1v1h-1zM54 182h1v1h-1zM54 181h1v1h-1zM54 180h1v1h-1zM54 179h1v1h-1zM54 177h1v1h-1zM55 183h1v1h-1zM55 182h1v1h-1zM55 181h1v1h-1zM55 180h1v1h-1zM55 179h1v1h-1zM55 177h1v1h-1zM56 183h1v1h-1zM56 182h1v1h-1zM56 181h1v1h-1zM56 180h1v1h-1zM57 183h1v1h-1zM57 182h1v1h-1zM57 181h1v1h-1zM57 180h1v1h-1zM57 179h1v1h-1zM57 178h1v1h-1zM58 183h1v1h-1zM58 182h1v1h-1zM58 181h1v1h-1zM58 180h1v1h-1zM58 179h1v1h-1zM58 178h1v1h-1zM58 177h1v1h-1zM59 183h1v1h-1zM59 182h1v1h-1zM59 181h1v1h-1zM59 180h1v1h-1zM59 179h1v1h-1zM60 183h1v1h-1zM60 182h1v1h-1zM60 181h1v1h-1zM60 180h1v1h-1zM60 179h1v1h-1zM60 178h1v1h-1zM61 183h1v1h-1zM61 182h1v1h-1zM61 181h1v1h-1zM61 179h1v1h-1zM62 183h1v1h-1zM62 182h1v1h-1zM62 181h1v1h-1zM62 180h1v1h-1zM62 179h1v1h-1zM62 178h1v1h-1zM62 177h1v1h-1zM62 176h1v1h-1zM63 183h1v1h-1zM63 182h1v1h-1zM63 181h1v1h-1zM63 180h1v1h-1zM63 179h1v1h-1zM63 178h1v1h-1zM63 176h1v1h-1zM64 183h1v1h-1zM64 182h1v1h-1zM64 181h1v1h-1zM64 180h1v1h-1zM64 179h1v1h-1zM64 178h1v1h-1zM65 183h1v1h-1zM65 182h1v1h-1zM65 181h1v1h-1zM65 180h1v1h-1zM65 179h1v1h-1zM65 178h1v1h-1zM65 176h1v1h-1zM66 183h1v1h-1zM66 182h1v1h-1zM66 181h1v1h-1zM66 180h1v1h-1zM67 183h1v1h-1zM67 182h1v1h-1zM67 181h1v1h-1zM67 180h1v1h-1zM67 179h1v1h-1zM67 177h1v1h-1zM68 183h1v1h-1zM68 182h1v1h-1zM68 181h1v1h-1zM68 179h1v1h-1zM68 178h1v1h-1zM69 183h1v1h-1zM69 182h1v1h-1zM69 181h1v1h-1zM69 180h1v1h-1zM69 179h1v1h-1zM69 178h1v1h-1zM69 176h1v1h-1zM70 183h1v1h-1zM70 182h1v1h-1zM70 181h1v1h-1zM70 180h1v1h-1zM70 179h1v1h-1zM70 178h1v1h-1zM71 182h1v1h-1zM71 180h1v1h-1zM72 183h1v1h-1zM72 182h1v1h-1zM72 180h1v1h-1zM72 179h1v1h-1zM72 178h1v1h-1zM72 177h1v1h-1zM72 176h1v1h-1zM73 183h1v1h-1zM73 182h1v1h-1zM73 181h1v1h-1zM73 180h1v1h-1zM73 179h1v1h-1zM73 178h1v1h-1zM74 183h1v1h-1zM74 182h1v1h-1zM74 181h1v1h-1zM74 180h1v1h-1zM74 179h1v1h-1zM75 183h1v1h-1zM75 182h1v1h-1zM75 181h1v1h-1zM75 180h1v1h-1zM76 183h1v1h-1zM76 182h1v1h-1zM76 181h1v1h-1zM77 183h1v1h-1zM77 182h1v1h-1zM77 181h1v1h-1zM78 182h1v1h-1zM78 181h1v1h-1zM78 180h1v1h-1zM78 179h1v1h-1zM78 177h1v1h-1zM79 183h1v1h-1zM79 182h1v1h-1zM79 181h1v1h-1zM79 180h1v1h-1zM79 179h1v1h-1zM80 183h1v1h-1zM80 182h1v1h-1zM80 181h1v1h-1zM80 180h1v1h-1zM80 178h1v1h-1zM81 183h1v1h-1zM81 181h1v1h-1zM81 180h1v1h-1zM81 178h1v1h-1zM82 183h1v1h-1zM82 182h1v1h-1zM82 181h1v1h-1zM82 180h1v1h-1zM82 179h1v1h-1zM82 177h1v1h-1zM83 183h1v1h-1zM83 182h1v1h-1zM83 181h1v1h-1zM83 180h1v1h-1zM83 179h1v1h-1zM83 177h1v1h-1zM84 183h1v1h-1zM84 182h1v1h-1zM84 181h1v1h-1zM84 180h1v1h-1zM84 179h1v1h-1zM84 178h1v1h-1zM85 183h1v1h-1zM85 181h1v1h-1zM85 180h1v1h-1zM85 179h1v1h-1zM85 178h1v1h-1zM86 183h1v1h-1zM86 182h1v1h-1zM86 181h1v1h-1zM86 180h1v1h-1zM87 183h1v1h-1zM87 182h1v1h-1zM87 181h1v1h-1zM87 180h1v1h-1zM87 179h1v1h-1zM87 178h1v1h-1zM87 177h1v1h-1zM88 183h1v1h-1zM88 182h1v1h-1zM88 181h1v1h-1zM88 180h1v1h-1zM88 179h1v1h-1zM88 177h1v1h-1zM89 183h1v1h-1zM89 182h1v1h-1zM89 181h1v1h-1zM89 180h1v1h-1zM90 183h1v1h-1zM90 182h1v1h-1zM90 181h1v1h-1zM90 179h1v1h-1zM91 183h1v1h-1zM91 182h1v1h-1zM91 181h1v1h-1zM91 178h1v1h-1zM92 183h1v1h-1zM92 182h1v1h-1zM92 181h1v1h-1zM92 180h1v1h-1zM92 179h1v1h-1zM92 178h1v1h-1zM93 183h1v1h-1zM93 182h1v1h-1zM93 181h1v1h-1zM93 180h1v1h-1zM93 179h1v1h-1zM93 178h1v1h-1zM94 183h1v1h-1zM94 182h1v1h-1zM94 181h1v1h-1zM94 180h1v1h-1zM94 178h1v1h-1zM95 183h1v1h-1zM95 182h1v1h-1zM95 181h1v1h-1zM95 180h1v1h-1zM95 179h1v1h-1zM96 183h1v1h-1zM96 182h1v1h-1zM96 181h1v1h-1zM96 180h1v1h-1zM96 179h1v1h-1zM96 178h1v1h-1zM96 177h1v1h-1zM97 183h1v1h-1zM97 182h1v1h-1zM97 181h1v1h-1zM98 183h1v1h-1zM98 182h1v1h-1zM98 181h1v1h-1zM98 180h1v1h-1zM98 178h1v1h-1zM99 183h1v1h-1zM99 182h1v1h-1zM99 181h1v1h-1zM99 177h1v1h-1zM100 183h1v1h-1zM100 182h1v1h-1zM100 181h1v1h-1zM100 180h1v1h-1zM100 179h1v1h-1zM100 178h1v1h-1zM101 183h1v1h-1zM101 182h1v1h-1zM101 181h1v1h-1zM101 180h1v1h-1zM101 179h1v1h-1zM102 183h1v1h-1zM102 182h1v1h-1zM102 181h1v1h-1zM102 180h1v1h-1zM102 178h1v1h-1zM103 183h1v1h-1zM103 182h1v1h-1zM103 181h1v1h-1zM103 180h1v1h-1zM103 179h1v1h-1zM103 177h1v1h-1zM104 183h1v1h-1zM104 181h1v1h-1zM105 183h1v1h-1zM105 182h1v1h-1zM105 181h1v1h-1zM105 180h1v1h-1zM105 179h1v1h-1zM106 183h1v1h-1zM106 182h1v1h-1zM106 181h1v1h-1zM106 180h1v1h-1zM106 179h1v1h-1zM107 183h1v1h-1zM107 182h1v1h-1zM107 181h1v1h-1zM107 180h1v1h-1zM107 179h1v1h-1zM107 178h1v1h-1zM108 183h1v1h-1zM108 182h1v1h-1zM108 181h1v1h-1zM108 179h1v1h-1zM109 183h1v1h-1zM109 182h1v1h-1zM109 181h1v1h-1zM110 183h1v1h-1zM110 181h1v1h-1zM110 180h1v1h-1zM110 179h1v1h-1zM111 183h1v1h-1zM111 182h1v1h-1zM111 181h1v1h-1zM111 180h1v1h-1zM111 179h1v1h-1zM112 183h1v1h-1zM112 182h1v1h-1zM112 181h1v1h-1zM112 180h1v1h-1zM112 179h1v1h-1zM113 183h1v1h-1zM113 182h1v1h-1zM113 181h1v1h-1zM113 180h1v1h-1zM113 179h1v1h-1zM113 178h1v1h-1zM114 183h1v1h-1zM114 182h1v1h-1zM114 181h1v1h-1zM114 180h1v1h-1zM114 179h1v1h-1zM114 178h1v1h-1zM115 182h1v1h-1zM115 181h1v1h-1zM115 180h1v1h-1zM115 179h1v1h-1zM116 183h1v1h-1zM116 181h1v1h-1zM116 180h1v1h-1zM116 178h1v1h-1zM117 183h1v1h-1zM117 181h1v1h-1zM117 180h1v1h-1zM117 177h1v1h-1zM118 183h1v1h-1zM118 182h1v1h-1zM118 181h1v1h-1zM118 180h1v1h-1zM119 183h1v1h-1zM119 181h1v1h-1zM119 180h1v1h-1zM119 179h1v1h-1zM120 182h1v1h-1zM120 181h1v1h-1zM120 180h1v1h-1zM120 179h1v1h-1zM120 178h1v1h-1zM121 183h1v1h-1zM121 182h1v1h-1zM121 181h1v1h-1zM121 180h1v1h-1zM121 179h1v1h-1zM122 183h1v1h-1zM122 180h1v1h-1zM123 183h1v1h-1zM123 181h1v1h-1zM123 179h1v1h-1zM124 182h1v1h-1zM124 181h1v1h-1zM124 180h1v1h-1zM124 179h1v1h-1zM125 183h1v1h-1zM125 182h1v1h-1zM125 181h1v1h-1zM125 179h1v1h-1zM126 183h1v1h-1zM126 182h1v1h-1zM126 181h1v1h-1zM126 180h1v1h-1zM126 179h1v1h-1zM127 181h1v1h-1zM127 180h1v1h-1zM128 183h1v1h-1zM128 181h1v1h-1zM128 180h1v1h-1zM129 181h1v1h-1zM130 182h1v1h-1zM130 179h1v1h-1zM131 182h1v1h-1zM131 181h1v1h-1zM131 180h1v1h-1zM131 178h1v1h-1zM132 181h1v1h-1zM132 180h1v1h-1zM132 179h1v1h-1zM133 183h1v1h-1zM133 182h1v1h-1zM133 181h1v1h-1zM133 180h1v1h-1zM133 179h1v1h-1zM133 178h1v1h-1zM134 181h1v1h-1zM134 179h1v1h-1zM135 183h1v1h-1zM135 181h1v1h-1zM136 182h1v1h-1zM136 181h1v1h-1zM136 180h1v1h-1zM136 179h1v1h-1zM137 183h1v1h-1zM137 182h1v1h-1zM137 181h1v1h-1zM137 180h1v1h-1zM138 183h1v1h-1zM138 182h1v1h-1zM138 181h1v1h-1zM138 180h1v1h-1zM139 183h1v1h-1zM139 180h1v1h-1zM139 179h1v1h-1zM139 178h1v1h-1zM140 182h1v1h-1zM141 183h1v1h-1zM141 182h1v1h-1zM141 181h1v1h-1zM142 183h1v1h-1zM142 181h1v1h-1zM142 180h1v1h-1zM143 183h1v1h-1zM143 180h1v1h-1zM143 179h1v1h-1zM144 181h1v1h-1zM144 180h1v1h-1zM144 179h1v1h-1zM144 178h1v1h-1zM146 183h1v1h-1zM146 181h1v1h-1zM146 180h1v1h-1zM146 179h1v1h-1zM146 178h1v1h-1zM147 183h1v1h-1zM147 182h1v1h-1zM147 181h1v1h-1zM147 180h1v1h-1zM147 178h1v1h-1zM148 183h1v1h-1zM148 181h1v1h-1zM148 180h1v1h-1zM149 183h1v1h-1zM150 183h1v1h-1zM150 181h1v1h-1zM150 180h1v1h-1zM151 183h1v1h-1zM151 182h1v1h-1zM151 180h1v1h-1zM152 183h1v1h-1zM152 182h1v1h-1zM152 180h1v1h-1zM153 182h1v1h-1zM153 181h1v1h-1zM154 183h1v1h-1zM154 182h1v1h-1zM154 181h1v1h-1zM154 180h1v1h-1zM154 179h1v1h-1zM154 178h1v1h-1zM155 183h1v1h-1zM155 182h1v1h-1zM155 181h1v1h-1zM155 179h1v1h-1zM156 181h1v1h-1zM156 180h1v1h-1zM157 181h1v1h-1zM157 180h1v1h-1zM158 183h1v1h-1zM158 182h1v1h-1zM158 181h1v1h-1zM158 180h1v1h-1zM158 178h1v1h-1zM159 183h1v1h-1zM159 181h1v1h-1zM160 182h1v1h-1zM160 181h1v1h-1zM160 180h1v1h-1zM160 179h1v1h-1zM161 183h1v1h-1zM161 182h1v1h-1zM161 179h1v1h-1zM162 183h1v1h-1zM162 182h1v1h-1zM162 181h1v1h-1zM162 179h1v1h-1zM163 183h1v1h-1zM163 182h1v1h-1zM163 181h1v1h-1zM163 180h1v1h-1zM163 179h1v1h-1zM164 183h1v1h-1zM164 182h1v1h-1zM164 181h1v1h-1zM164 179h1v1h-1zM165 181h1v1h-1zM165 179h1v1h-1zM166 183h1v1h-1zM166 182h1v1h-1zM166 181h1v1h-1zM166 180h1v1h-1zM166 179h1v1h-1zM166 178h1v1h-1zM167 182h1v1h-1zM167 181h1v1h-1zM167 180h1v1h-1zM168 182h1v1h-1zM168 179h1v1h-1zM169 180h1v1h-1zM170 183h1v1h-1zM170 182h1v1h-1zM170 179h1v1h-1zM171 183h1v1h-1zM171 182h1v1h-1zM171 181h1v1h-1zM171 180h1v1h-1zM172 183h1v1h-1zM172 182h1v1h-1zM172 181h1v1h-1zM172 180h1v1h-1zM172 179h1v1h-1zM173 182h1v1h-1zM173 181h1v1h-1zM173 179h1v1h-1zM173 178h1v1h-1zM174 182h1v1h-1zM174 181h1v1h-1zM175 183h1v1h-1zM175 182h1v1h-1zM175 181h1v1h-1zM175 180h1v1h-1zM175 178h1v1h-1zM176 183h1v1h-1zM176 182h1v1h-1zM176 180h1v1h-1zM177 181h1v1h-1zM177 180h1v1h-1zM178 183h1v1h-1zM178 181h1v1h-1zM178 180h1v1h-1zM178 179h1v1h-1zM178 178h1v1h-1zM179 183h1v1h-1zM179 182h1v1h-1zM179 181h1v1h-1zM180 181h1v1h-1zM181 182h1v1h-1zM181 181h1v1h-1zM182 183h1v1h-1zM182 181h1v1h-1zM182 179h1v1h-1zM183 183h1v1h-1zM183 182h1v1h-1zM183 181h1v1h-1zM183 178h1v1h-1zM184 183h1v1h-1zM184 181h1v1h-1zM184 178h1v1h-1zM185 180h1v1h-1zM186 182h1v1h-1zM186 181h1v1h-1zM187 183h1v1h-1zM187 182h1v1h-1zM187 181h1v1h-1zM188 180h1v1h-1zM189 183h1v1h-1zM189 182h1v1h-1zM189 181h1v1h-1zM189 178h1v1h-1zM190 181h1v1h-1zM190 180h1v1h-1zM190 179h1v1h-1zM191 183h1v1h-1zM191 181h1v1h-1zM191 180h1v1h-1zM192 183h1v1h-1zM192 182h1v1h-1zM193 183h1v1h-1zM193 180h1v1h-1zM193 179h1v1h-1zM194 183h1v1h-1zM194 182h1v1h-1zM194 180h1v1h-1zM195 183h1v1h-1zM195 182h1v1h-1zM195 181h1v1h-1zM195 180h1v1h-1zM196 182h1v1h-1zM196 181h1v1h-1zM196 180h1v1h-1zM196 179h1v1h-1zM197 180h1v1h-1zM198 183h1v1h-1zM199 181h1v1h-1zM200 181h1v1h-1zM202 183h1v1h-1zM202 182h1v1h-1zM203 182h1v1h-1zM204 183h1v1h-1zM205 183h1v1h-1zM48 178h1v1h-1zM108 179h1v1h-1zM186 179h1v1h-1zM103 179h1v1h-1zM80 178h1v1h-1zM25 179h1v1h-1zM117 174h1v1h-1zM74 177h1v1h-1zM60 176h1v1h-1zM13 179h1v1h-1zM201 179h1v1h-1zM144 178h1v1h-1zM193 179h1v1h-1zM22 176h1v1h-1zM74 174h1v1h-1zM33 178h1v1h-1zM160 177h1v1h-1zM70 179h1v1h-1zM50 179h1v1h-1zM170 177h1v1h-1zM18 176h1v1h-1zM69 179h1v1h-1zM79 177h1v1h-1zM45 172h1v1h-1zM72 177h1v1h-1zM0 179h1v1h-1zM17 178h1v1h-1zM66 174h1v1h-1zM179 178h1v1h-1zM100 179h1v1h-1zM104 178h1v1h-1zM38 177h1v1h-1zM146 176h1v1h-1zM172 179h1v1h-1zM151 176h1v1h-1zM94 179h1v1h-1zM204 179h1v1h-1zM132 177h1v1h-1zM6 170h1v1h-1zM185 177h1v1h-1zM167 179h1v1h-1zM101 179h1v1h-1zM88 179h1v1h-1zM105 179h1v1h-1zM91 178h1v1h-1zM153 179h1v1h-1zM69 177h1v1h-1zM149 179h1v1h-1zM140 178h1v1h-1zM48 177h1v1h-1zM183 179h1v1h-1zM67 177h1v1h-1zM136 178h1v1h-1zM108 178h1v1h-1zM161 177h1v1h-1zM195 177h1v1h-1zM76 178h1v1h-1zM94 174h1v1h-1zM45 178h1v1h-1zM125 178h1v1h-1zM59 179h1v1h-1zM175 179h1v1h-1zM70 178h1v1h-1zM5 179h1v1h-1zM113 176h1v1h-1zM146 177h1v1h-1zM180 179h1v1h-1zM27 178h1v1h-1zM23 179h1v1h-1zM141 178h1v1h-1zM139 177h1v1h-1zM117 177h1v1h-1zM16 177h1v1h-1zM65 177h1v1h-1zM10 176h1v1h-1zM125 173h1v1h-1zM192 177h1v1h-1zM47 179h1v1h-1zM195 179h1v1h-1zM46 179h1v1h-1zM5 175h1v1h-1zM191 179h1v1h-1zM100 178h1v1h-1zM35 173h1v1h-1zM57 179h1v1h-1zM174 179h1v1h-1zM111 178h1v1h-1zM92 175h1v1h-1zM21 178h1v1h-1zM131 178h1v1h-1zM143 179h1v1h-1zM41 179h1v1h-1zM46 178h1v1h-1zM140 178h1v1h-1zM59 176h1v1h-1zM207 179h1v1h-1zM146 178h1v1h-1zM121 177h1v1h-1zM81 177h1v1h-1zM7 178h1v1h-1zM18 179h1v1h-1zM91 178h1v1h-1zM112 177h1v1h-1zM122 177h1v1h-1zM140 179h1v1h-1zM90 179h1v1h-1zM67 178h1v1h-1zM70 178h1v1h-1zM105 178h1v1h-1zM77 178h1v1h-1zM205 176h1v1h-1zM53 176h1v1h-1zM81 178h1v1h-1zM138 178h1v1h-1zM83 178h1v1h-1zM200 178h1v1h-1zM142 179h1v1h-1zM195 177h1v1h-1zM185 179h1v1h-1zM18 173h1v1h-1zM109 179h1v1h-1zM46 175h1v1h-1zM83 179h1v1h-1zM20 176h1v1h-1zM59 171h1v1h-1zM159 178h1v1h-1zM168 178h1v1h-1zM30 178h1v1h-1zM39 176h1v1h-1zM163 178h1v1h-1zM124 175h1v1h-1zM117 179h1v1h-1zM77 179h1v1h-1zM52 176h1v1h-1zM137 174h1v1h-1zM92 178h1v1h-1zM66 179h1v1h-1zM43 179h1v1h-1zM183 178h1v1h-1zM82 177h1v1h-1zM200 177h1v1h-1zM103 178h1v1h-1zM124 179h1v1h-1zM97 176h1v1h-1zM9 173h1v1h-1zM186 179h1v1h-1zM97 179h1v1h-1zM128 179h1v1h-1zM89 175h1v1h-1zM174 177h1v1h-1zM203 178h1v1h-1zM36 177h1v1h-1zM194 179h1v1h-1zM45 172h1v1h-1zM47 179h1v1h-1zM131 176h1v1h-1zM176 178h1v1h-1zM63 179h1v1h-1zM191 178h1v1h-1zM33 179h1v1h-1z" fill="#00ffff"/><path d="M1 176h1v1h-1zM4 182h1v1h-1zM7 177h1v1h-1zM8 180h1v1h-1zM8 177h1v1h-1zM8 176h1v1h-1zM8 175h1v1h-1zM9 178h1v1h-1zM10 182h1v1h-1zM10 176h1v1h-1zM11 177h1v1h-1zM12 177h1v1h-1zM13 176h1v1h-1zM13 175h1v1h-1zM14 178h1v1h-1zM14 176h1v1h-1zM16 177h1v1h-1zM17 177h1v1h-1zM19 179h1v1h-1zM19 178h1v1h-1zM19 177h1v1h-1zM21 175h1v1h-1zM22 180h1v1h-1zM23 177h1v1h-1zM23 176h1v1h-1zM24 181h1v1h-1zM25 177h1v1h-1zM25 176h1v1h-1zM26 177h1v1h-1zM26 176h1v1h-1zM27 178h1v1h-1zM27 177h1v1h-1zM30 178h1v1h-1zM34 179h1v1h-1zM37 177h1v1h-1zM42 179h1v1h-1zM42 178h1v1h-1zM43 179h1v1h-1zM45 179h1v1h-1zM48 177h1v1h-1zM49 179h1v1h-1zM49 178h1v1h-1zM49 176h1v1h-1zM50 178h1v1h-1zM53 179h1v1h-1zM53 177h1v1h-1zM57 177h1v1h-1zM63 177h1v1h-1zM67 178h1v1h-1zM69 177h1v1h-1zM71 183h1v1h-1zM71 181h1v1h-1zM71 179h1v1h-1zM71 178h1v1h-1zM72 181h1v1h-1zM76 178h1v1h-1zM77 178h1v1h-1zM78 183h1v1h-1zM78 178h1v1h-1zM79 178h1v1h-1zM79 177h1v1h-1zM80 179h1v1h-1zM80 177h1v1h-1zM81 179h1v1h-1zM82 178h1v1h-1zM83 178h1v1h-1zM83 176h1v1h-1zM85 182h1v1h-1zM88 178h1v1h-1zM89 178h1v1h-1zM91 179h1v1h-1zM93 177h1v1h-1zM97 180h1v1h-1zM97 179h1v1h-1zM98 179h1v1h-1zM99 179h1v1h-1zM103 178h1v1h-1zM107 177h1v1h-1zM110 182h1v1h-1zM110 178h1v1h-1zM116 179h1v1h-1zM117 179h1v1h-1zM117 178h1v1h-1zM118 179h1v1h-1zM123 180h1v1h-1zM127 179h1v1h-1zM129 179h1v1h-1zM130 181h1v1h-1zM131 179h1v1h-1zM131 177h1v1h-1zM134 180h1v1h-1zM143 181h1v1h-1zM145 181h1v1h-1zM149 181h1v1h-1zM150 179h1v1h-1zM153 179h1v1h-1zM159 180h1v1h-1zM161 180h1v1h-1zM163 178h1v1h-1zM165 180h1v1h-1zM168 181h1v1h-1zM168 178h1v1h-1zM170 180h1v1h-1zM170 178h1v1h-1zM171 179h1v1h-1zM174 180h1v1h-1zM175 179h1v1h-1zM176 181h1v1h-1zM177 179h1v1h-1zM179 180h1v1h-1zM182 178h1v1h-1zM184 180h1v1h-1zM185 183h1v1h-1zM186 183h1v1h-1zM187 180h1v1h-1zM189 179h1v1h-1zM194 181h1v1h-1zM200 183h1v1h-1zM201 183h1v1h-1zM201 182h1v1h-1zM200 176h1v1h-1zM84 179h1v1h-1zM158 178h1v1h-1zM199 174h1v1h-1zM99 174h1v1h-1zM112 175h1v1h-1zM14 177h1v1h-1zM156 179h1v1h-1zM142 175h1v1h-1zM141 177h1v1h-1zM55 170h1v1h-1zM187 178h1v1h-1zM2 179h1v1h-1zM188 179h1v1h-1zM84 177h1v1h-1zM106 178h1v1h-1zM129 178h1v1h-1zM77 178h1v1h-1zM113 179h1v1h-1zM31 177h1v1h-1zM113 179h1v1h-1zM49 179h1v1h-1zM50 175h1v1h-1zM80 179h1v1h-1zM46 177h1v1h-1zM94 178h1v1h-1zM125 179h1v1h-1zM54 176h1v1h-1zM89 174h1v1h-1zM146 179h1v1h-1zM122 178h1v1h-1zM105 179h1v1h-1zM108 177h1v1h-1zM106 179h1v1h-1zM90 177h1v1h-1zM49 178h1v1h-1zM14 179h1v1h-1zM112 170h1v1h-1zM117 178h1v1h-1zM26 176h1v1h-1zM120 172h1v1h-1zM164 177h1v1h-1zM23 178h1v1h-1zM84 176h1v1h-1zM203 179h1v1h-1zM179 178h1v1h-1zM137 179h1v1h-1zM23 178h1v1h-1zM110 179h1v1h-1zM73 178h1v1h-1zM128 177h1v1h-1zM162 178h1v1h-1zM100 177h1v1h-1zM152 179h1v1h-1zM98 177h1v1h-1zM186 179h1v1h-1zM60 179h1v1h-1zM202 179h1v1h-1zM73 179h1v1h-1zM68 175h1v1h-1zM81 178h1v1h-1zM20 176h1v1h-1zM18 178h1v1h-1zM190 179h1v1h-1zM24 168h1v1h-1zM122 179h1v1h-1zM96 178h1v1h-1zM198 179h1v1h-1zM96 179h1v1h-1zM14 173h1v1h-1zM107 171h1v1h-1zM20 177h1v1h-1zM77 175h1v1h-1zM133 179h1v1h-1zM46 179h1v1h-1zM34 173h1v1h-1zM35 177h1v1h-1zM53 177h1v1h-1zM163 175h1v1h-1zM102 178h1v1h-1zM171 178h1v1h-1zM194 175h1v1h-1zM55 175h1v1h-1zM188 175h1v1h-1zM110 175h1v1h-1zM5 178h1v1h-1zM189 179h1v1h-1zM62 176h1v1h-1zM100 178h1v1h-1zM163 179h1v1h-1zM154 177h1v1h-1zM27 178h1v1h-1zM43 172h1v1h-1zM73 176h1v1h-1zM54 178h1v1h-1zM175 179h1v1h-1zM181 179h1v1h-1zM114 178h1v1h-1zM145 179h1v1h-1zM101 179h1v1h-1zM35 178h1v1h-1zM99 179h1v1h-1zM168 177h1v1h-1zM174 176h1v1h-1zM23 179h1v1h-1zM145 177h1v1h-1zM172 179h1v1h-1zM43 179h1v1h-1zM95 178h1v1h-1zM207 179h1v1h-1zM148 177h1v1h-1zM29 178h1v1h-1zM149 178h1v1h-1zM70 179h1v1h-1zM165 178h1v1h-1zM24 176h1v1h-1zM153 176h1v1h-1zM79 178h1v1h-1zM107 178h1v1h-1zM30 179h1v1h-1zM25 179h1v1h-1zM189 179h1v1h-1zM62 176h1v1h-1zM46 179h1v1h-1zM114 178h1v1h-1zM174 179h1v1h-1zM124 176h1v1h-1zM89 178h1v1h-1zM56 170h1v1h-1zM196 177h1v1h-1zM28 177h1v1h-1zM168 178h1v1h-1zM53 177h1v1h-1zM83 179h1v1h-1zM62 176h1v1h-1zM82 178h1v1h-1zM96 176h1v1h-1zM64 178h1v1h-1zM175 178h1v1h-1zM44 178h1v1h-1zM201 179h1v1h-1zM55 178h1v1h-1zM163 179h1v1h-1zM119 179h1v1h-1zM96 179h1v1h-1zM36 179h1v1h-1zM100 179h1v1h-1zM15 178h1v1h-1zM198 179h1v1h-1zM162 178h1v1h-1zM42 178h1v1h-1zM130 179h1v1h-1zM103 178h1v1h-1zM102 178h1v1h-1zM190 178h1v1h-1zM63 174h1v1h-1zM146 174h1v1h-1zM30 176h1v1h-1zM159 179h1v1h-1zM122 173h1v1h-1zM165 179h1v1h-1zM173 178h1v1h-1zM27 179h1v1h-1zM105 179h1v1h-1zM203 179h1v1h-1zM65 177h1v1h-1zM167 178h1v1h-1zM28 174h1v1h-1zM50 176h1v1h-1zM41 179h1v1h-1zM83 179h1v1h-1zM15 175h1v1h-1zM189 179h1v1h-1zM163 157h1v1h-1zM160 160h1v1h-1z" fill="#0080ff"/><path d="M1 175h1v1h-1zM4 179h1v1h-1zM15 175h1v1h-1zM33 178h1v1h-1zM55 178h1v1h-1zM66 178h1v1h-1zM74 178h1v1h-1zM80 176h1v1h-1zM99 180h1v1h-1zM99 178h1v1h-1zM105 178h1v1h-1zM105 177h1v1h-1zM115 183h1v1h-1zM116 182h1v1h-1zM116 177h1v1h-1zM117 182h1v1h-1zM120 183h1v1h-1zM124 183h1v1h-1zM127 183h1v1h-1zM127 178h1v1h-1zM128 179h1v1h-1zM129 183h1v1h-1zM129 180h1v1h-1zM130 183h1v1h-1zM134 183h1v1h-1zM134 178h1v1h-1zM135 182h1v1h-1zM135 180h1v1h-1zM136 183h1v1h-1zM140 183h1v1h-1zM142 179h1v1h-1zM143 182h1v1h-1zM144 183h1v1h-1zM145 179h1v1h-1zM148 182h1v1h-1zM149 180h1v1h-1zM150 178h1v1h-1zM152 179h1v1h-1zM153 183h1v1h-1zM156 182h1v1h-1zM156 178h1v1h-1zM157 179h1v1h-1zM169 181h1v1h-1zM170 181h1v1h-1zM173 183h1v1h-1zM177 182h1v1h-1zM178 182h1v1h-1zM180 183h1v1h-1zM180 182h1v1h-1zM181 180h1v1h-1zM182 182h1v1h-1zM185 181h1v1h-1zM187 179h1v1h-1zM188 183h1v1h-1zM188 182h1v1h-1zM189 180h1v1h-1zM190 183h1v1h-1zM190 182h1v1h-1zM200 182h1v1h-1zM206 183h1v1h-1z" fill="#ffff00"/><path d="M24 177h1v1h-1zM28 176h1v1h-1zM30 177h1v1h-1zM50 176h1v1h-1zM71 177h1v1h-1zM73 177h1v1h-1zM75 178h1v1h-1zM76 179h1v1h-1zM85 177h1v1h-1zM86 179h1v1h-1zM88 176h1v1h-1zM89 179h1v1h-1zM100 177h1v1h-1zM109 180h1v1h-1zM109 179h1v1h-1zM118 177h1v1h-1zM119 182h1v1h-1zM122 181h1v1h-1zM130 178h1v1h-1zM131 183h1v1h-1zM132 183h1v1h-1zM134 182h1v1h-1zM139 182h1v1h-1zM140 181h1v1h-1zM142 182h1v1h-1zM144 182h1v1h-1zM144 177h1v1h-1zM145 182h1v1h-1zM146 182h1v1h-1zM155 180h1v1h-1zM156 183h1v1h-1zM156 179h1v1h-1zM165 183h1v1h-1zM165 182h1v1h-1zM167 183h1v1h-1zM174 183h1v1h-1zM177 183h1v1h-1zM182 180h1v1h-1zM193 181h1v1h-1zM196 183h1v1h-1zM197 182h1v1h-1zM198 182h1v1h-1zM199 183h1v1h-1zM207 183h1v1h-1z" fill="#ff0000"/><path d="M2 177h1v1h-1zM3 177h1v1h-1zM3 176h1v1h-1zM4 181h1v1h-1zM7 176h1v1h-1zM9 177h1v1h-1zM10 175h1v1h-1zM14 177h1v1h-1zM20 177h1v1h-1zM33 179h1v1h-1zM34 177h1v1h-1zM35 178h1v1h-1zM36 179h1v1h-1zM36 178h1v1h-1zM36 177h1v1h-1zM37 182h1v1h-1zM39 177h1v1h-1zM41 178h1v1h-1zM44 182h1v1h-1zM44 178h1v1h-1zM46 177h1v1h-1zM47 182h1v1h-1zM47 179h1v1h-1zM51 177h1v1h-1zM52 178h1v1h-1zM54 178h1v1h-1zM56 179h1v1h-1zM56 178h1v1h-1zM59 178h1v1h-1zM61 180h1v1h-1zM61 178h1v1h-1zM64 177h1v1h-1zM65 177h1v1h-1zM66 179h1v1h-1zM68 180h1v1h-1zM73 176h1v1h-1zM75 179h1v1h-1zM75 177h1v1h-1zM76 180h1v1h-1zM77 180h1v1h-1zM77 179h1v1h-1zM81 182h1v1h-1zM86 178h1v1h-1zM90 180h1v1h-1zM90 178h1v1h-1zM91 180h1v1h-1zM94 179h1v1h-1zM98 177h1v1h-1zM101 178h1v1h-1zM102 179h1v1h-1zM104 182h1v1h-1zM104 180h1v1h-1zM104 179h1v1h-1zM106 178h1v1h-1zM108 180h1v1h-1zM108 178h1v1h-1zM115 178h1v1h-1zM118 178h1v1h-1zM122 182h1v1h-1zM122 179h1v1h-1zM123 182h1v1h-1zM124 178h1v1h-1zM125 180h1v1h-1zM127 182h1v1h-1zM128 182h1v1h-1zM129 182h1v1h-1zM130 180h1v1h-1zM132 182h1v1h-1zM135 179h1v1h-1zM137 179h1v1h-1zM138 179h1v1h-1zM139 181h1v1h-1zM140 180h1v1h-1zM141 180h1v1h-1zM141 179h1v1h-1zM145 183h1v1h-1zM145 180h1v1h-1zM147 179h1v1h-1zM149 182h1v1h-1zM150 182h1v1h-1zM151 181h1v1h-1zM152 181h1v1h-1zM153 180h1v1h-1zM157 183h1v1h-1zM157 182h1v1h-1zM158 179h1v1h-1zM159 182h1v1h-1zM160 183h1v1h-1zM161 181h1v1h-1zM162 180h1v1h-1zM164 180h1v1h-1zM168 183h1v1h-1zM168 180h1v1h-1zM169 183h1v1h-1zM169 182h1v1h-1zM173 180h1v1h-1zM180 180h1v1h-1zM180 179h1v1h-1zM181 183h1v1h-1zM183 180h1v1h-1zM183 179h1v1h-1zM184 182h1v1h-1zM184 179h1v1h-1zM185 182h1v1h-1zM186 180h1v1h-1zM188 181h1v1h-1zM191 182h1v1h-1zM192 181h1v1h-1zM192 180h1v1h-1zM192 179h1v1h-1zM193 182h1v1h-1zM194 179h1v1h-1zM197 183h1v1h-1zM197 181h1v1h-1zM199 182h1v1h-1zM203 183h1v1h-1zM201 178h1v1h-1zM110 176h1v1h-1zM44 178h1v1h-1zM167 178h1v1h-1zM117 179h1v1h-1zM71 179h1v1h-1zM160 179h1v1h-1zM198 178h1v1h-1zM124 177h1v1h-1zM198 173h1v1h-1zM19 178h1v1h-1zM15 175h1v1h-1zM137 179h1v1h-1zM46 178h1v1h-1zM40 177h1v1h-1zM194 177h1v1h-1zM26 179h1v1h-1zM27 177h1v1h-1zM24 177h1v1h-1zM78 179h1v1h-1zM114 179h1v1h-1zM186 177h1v1h-1zM205 174h1v1h-1zM44 179h1v1h-1zM55 176h1v1h-1zM97 179h1v1h-1zM203 178h1v1h-1zM138 178h1v1h-1zM53 179h1v1h-1zM141 178h1v1h-1zM3 173h1v1h-1zM18 175h1v1h-1zM180 173h1v1h-1zM79 178h1v1h-1zM95 179h1v1h-1zM83 179h1v1h-1zM152 178h1v1h-1zM32 176h1v1h-1zM163 178h1v1h-1zM90 177h1v1h-1zM39 179h1v1h-1zM46 174h1v1h-1zM52 179h1v1h-1zM37 179h1v1h-1zM46 179h1v1h-1zM23 176h1v1h-1zM43 179h1v1h-1zM85 173h1v1h-1zM197 179h1v1h-1zM172 176h1v1h-1zM16 178h1v1h-1zM203 179h1v1h-1zM131 176h1v1h-1zM170 176h1v1h-1zM136 179h1v1h-1zM108 179h1v1h-1zM79 179h1v1h-1zM134 176h1v1h-1zM181 179h1v1h-1zM31 178h1v1h-1zM21 175h1v1h-1zM168 179h1v1h-1zM28 175h1v1h-1zM17 175h1v1h-1zM98 177h1v1h-1zM8 179h1v1h-1zM197 179h1v1h-1zM2 174h1v1h-1zM138 179h1v1h-1zM39 178h1v1h-1zM169 179h1v1h-1zM70 177h1v1h-1zM1 179h1v1h-1zM5 174h1v1h-1zM178 179h1v1h-1zM78 179h1v1h-1zM57 173h1v1h-1zM48 175h1v1h-1zM201 178h1v1h-1zM166 179h1v1h-1zM51 178h1v1h-1zM197 179h1v1h-1zM33 175h1v1h-1zM67 179h1v1h-1zM120 179h1v1h-1zM20 175h1v1h-1zM51 177h1v1h-1zM8 63h1v1h-1zM14 144h1v1h-1zM31 144h1v1h-1zM19 164h1v1h-1zM79 144h1v1h-1zM110 144h1v1h-1zM155 153h1v1h-1z" fill="#00ff00"/></svg></div><div class="a" style="left:44px;top:120px;width:2px;height:1px;background:#505050"></div><div class="a" style="left:45px;top:129px;width:1px;height:1px;background:#505050"></div><div class="a" style="left:44px;top:139px;width:2px;height:1px;background:#505050"></div><div class="a" style="left:45px;top:148px;width:1px;height:1px;background:#505050"></div><div class="a" style="left:44px;top:157px;width:2px;height:1px;background:#505050"></div><div class="a" style="left:45px;top:166px;width:1px;height:1px;background:#505050"></div><div class="a" style="left:44px;top:175px;width:2px;height:1px;background:#505050"></div><div class="a" style="left:45px;top:185px;width:1px;height:1px;background:#505050"></div><div class="a" style="left:44px;top:194px;width:2px;height:1px;background:#505050"></div><div class="a" style="left:45px;top:203px;width:1px;height:1px;background:#505050"></div><div class="a" style="left:44px;top:212px;width:2px;height:1px;background:#505050"></div><div class="a" style="left:45px;top:221px;width:1px;height:1px;background:#505050"></div><div class="a" style="left:44px;top:231px;width:2px;height:1px;background:#505050"></div><div class="a" style="left:45px;top:240px;width:1px;height:1px;background:#505050"></div><div class="a" style="left:44px;top:249px;width:2px;height:1px;background:#505050"></div><div class="a" style="left:45px;top:258px;width:1px;height:1px;background:#505050"></div><div class="a" style="left:44px;top:267px;width:2px;height:1px;background:#505050"></div><div class="a" style="left:45px;top:277px;width:1px;height:1px;background:#505050"></div><div class="a" style="left:44px;top:286px;width:2px;height:1px;background:#505050"></div><div class="a" style="left:45px;top:295px;width:1px;height:1px;background:#505050"></div><div class="ax" style="left:4px;top:115.0px;width:40px;text-align:right">1000</div><div class="ax" style="left:4px;top:133.39999999999998px;width:40px;text-align:right">900</div><div class="ax" style="left:4px;top:151.79999999999995px;width:40px;text-align:right">800</div><div class="ax" style="left:4px;top:170.20000000000005px;width:40px;text-align:right">700</div><div class="ax" style="left:4px;top:188.60000000000002px;width:40px;text-align:right">600</div><div class="ax" style="left:4px;top:207.0px;width:40px;text-align:right">500</div><div class="ax" style="left:4px;top:225.39999999999998px;width:40px;text-align:right">400</div><div class="ax" style="left:4px;top:243.79999999999995px;width:40px;text-align:right">300</div><div class="ax" style="left:4px;top:262.20000000000005px;width:40px;text-align:right">200</div><div class="ax" style="left:4px;top:280.6px;width:40px;text-align:right">100</div><div class="ax" style="left:49px;top:108px">ms</div><div class="ax" style="left:28.5px;top:305px;width:40px;text-align:center">0</div><div class="ax" style="left:67.3px;top:305px;width:40px;text-align:center">10</div><div class="ax" style="left:106.1px;top:305px;width:40px;text-align:center">20</div><div class="ax" style="left:144.89999999999998px;top:305px;width:40px;text-align:center">30</div><div class="ax" style="left:183.7px;top:305px;width:40px;text-align:center">40</div><div class="ax" style="left:222.5px;top:305px;width:40px;text-align:center">50</div><div class="ax" style="left:261.29999999999995px;top:305px;width:40px;text-align:center">60</div><div class="ax" style="left:300.09999999999997px;top:305px;width:40px;text-align:center">70</div><div class="ax" style="left:338.9px;top:305px;width:40px;text-align:center">80</div><div class="ax" style="left:377.7px;top:305px;width:40px;text-align:center">90</div><div class="ax" style="left:423px;top:305px">100%</div><div class="btn zh" style="left:456px;top:116px;width:73px;height:19px;line-height:16px">開始</div><div class="radio" style="left:455px;top:144px"></div><div class="radio on" style="left:455px;top:159px"></div><div class="lbl" style="left:471px;top:143px">讀取</div><div class="lbl" style="left:471px;top:158px">寫入</div><div class="a" style="left:35px;top:337px;width:413px;height:2px;background:#707070"></div><div class="a" style="left:125px;top:324px;width:2px;height:96px;background:#707070"></div><div class="a" style="left:234px;top:324px;width:2px;height:96px;background:#707070"></div><div class="a" style="left:344px;top:324px;width:2px;height:96px;background:#707070"></div><div class="lbl" style="left:53px;top:323px">傳送大小</div><div class="lbl" style="left:97px;top:323px;width:120px;text-align:right;">動作 / 秒</div><div class="lbl" style="left:206px;top:323px;width:120px;text-align:right;">平均存取時間</div><div class="lbl" style="left:322px;top:323px;width:120px;text-align:right;">agv. 速度</div><div class="sq" style="left:20px;top:346px;background:#ffff00"></div><div class="chk" style="left:35px;top:343px"><svg class="a" style="left:1px;top:1px" width="9" height="9" viewBox="0 0 9 9"><path d="M1.500 4l2 3.500 4-6.500" fill="none" stroke="#4a5f97" stroke-width="1.700"/></svg></div><div class="lbl" style="left:51px;top:343px">512 位元組</div><div class="lbl" style="left:97px;top:342px;width:120px;text-align:right;font-weight:bold;font-size:13px;letter-spacing:.35px">151 IOPS</div><div class="lbl" style="left:207px;top:342px;width:120px;text-align:right;font-weight:bold;font-size:13px;letter-spacing:.35px">6.6 ms</div><div class="lbl" style="left:323px;top:342px;width:120px;text-align:right;font-weight:bold;font-size:13px;letter-spacing:.35px">0.074 MB/s</div><div class="sq" style="left:20px;top:361px;background:#ff0000"></div><div class="chk" style="left:35px;top:358px"><svg class="a" style="left:1px;top:1px" width="9" height="9" viewBox="0 0 9 9"><path d="M1.500 4l2 3.500 4-6.500" fill="none" stroke="#4a5f97" stroke-width="1.700"/></svg></div><div class="lbl" style="left:51px;top:358px">4 KB</div><div class="lbl" style="left:97px;top:357px;width:120px;text-align:right;font-weight:bold;font-size:13px;letter-spacing:.35px">143 IOPS</div><div class="lbl" style="left:207px;top:357px;width:120px;text-align:right;font-weight:bold;font-size:13px;letter-spacing:.35px">7.0 ms</div><div class="lbl" style="left:323px;top:357px;width:120px;text-align:right;font-weight:bold;font-size:13px;letter-spacing:.35px">0.561 MB/s</div><div class="sq" style="left:20px;top:376px;background:#00ff00"></div><div class="chk" style="left:35px;top:373px"><svg class="a" style="left:1px;top:1px" width="9" height="9" viewBox="0 0 9 9"><path d="M1.500 4l2 3.500 4-6.500" fill="none" stroke="#4a5f97" stroke-width="1.700"/></svg></div><div class="lbl" style="left:51px;top:373px">64 KB</div><div class="lbl" style="left:97px;top:372px;width:120px;text-align:right;font-weight:bold;font-size:13px;letter-spacing:.35px">111 IOPS</div><div class="lbl" style="left:207px;top:372px;width:120px;text-align:right;font-weight:bold;font-size:13px;letter-spacing:.35px">9.0 ms</div><div class="lbl" style="left:323px;top:372px;width:120px;text-align:right;font-weight:bold;font-size:13px;letter-spacing:.35px">6.947 MB/s</div><div class="sq" style="left:20px;top:392px;background:#0080ff"></div><div class="chk" style="left:35px;top:389px"><svg class="a" style="left:1px;top:1px" width="9" height="9" viewBox="0 0 9 9"><path d="M1.500 4l2 3.500 4-6.500" fill="none" stroke="#4a5f97" stroke-width="1.700"/></svg></div><div class="lbl" style="left:51px;top:389px">1 MB</div><div class="lbl" style="left:97px;top:388px;width:120px;text-align:right;font-weight:bold;font-size:13px;letter-spacing:.35px">43 IOPS</div><div class="lbl" style="left:207px;top:388px;width:120px;text-align:right;font-weight:bold;font-size:13px;letter-spacing:.35px">23 ms</div><div class="lbl" style="left:323px;top:388px;width:120px;text-align:right;font-weight:bold;font-size:13px;letter-spacing:.35px">43.265 MB/s</div><div class="sq" style="left:20px;top:408px;background:#00ffff"></div><div class="chk" style="left:35px;top:405px"><svg class="a" style="left:1px;top:1px" width="9" height="9" viewBox="0 0 9 9"><path d="M1.500 4l2 3.500 4-6.500" fill="none" stroke="#4a5f97" stroke-width="1.700"/></svg></div><div class="lbl" style="left:51px;top:405px">隨機</div><div class="lbl" style="left:97px;top:404px;width:120px;text-align:right;font-weight:bold;font-size:13px;letter-spacing:.35px">69 IOPS</div><div class="lbl" style="left:207px;top:404px;width:120px;text-align:right;font-weight:bold;font-size:13px;letter-spacing:.35px">14 ms</div><div class="lbl" style="left:323px;top:404px;width:120px;text-align:right;font-weight:bold;font-size:13px;letter-spacing:.35px">34.915 MB/s</div></div></div><div class="win cz" style="left:672px;top:629px;width:415px;height:420px;border-radius:7px;background:#0a0b0d"><div class="a" style="left:1px;top:1px;right:1px;height:27px;background:linear-gradient(rgba(255,255,255,.10) 0,rgba(255,255,255,0) 60%),linear-gradient(100deg,#4a4e52 0,#52575c 18%,#3c4044 36%,#2c3034 50%,#39414a 62%,#444e58 72%,#30353b 84%,#24272b 100%)"></div><div class="a" style="left:4px;top:4px;width:92px;height:22px;border-radius:11px;background:#8a9096;filter:blur(7px);opacity:.85"></div><div class="a" style="left:1px;top:28px;width:5px;height:400px;background:linear-gradient(#2c2e30 0,#2c2e30 85px,#f4f4f4 89px,#b4b4b4 110px,#7a7a7a 150px,#4c4c4c 260px,#363636 370px)"></div><div class="a" style="right:1px;top:28px;width:5px;height:400px;background:linear-gradient(#5a5d60 0,#8a8c90 40px,#f0f0f0 80px,#fff 88px,#1c1d1f 90px,#1c1d1f 100%)"></div><div class="edge" style="border-color:#b8bcc0"></div><svg class="a" style="left:8px;top:6px" width="18" height="16" viewBox="0 0 18 16"><path d="M1 8l8-6 8 6-8 6z" fill="#f4f6f0" stroke="#7aa060" stroke-width="1"/><path d="M1.500 8.500l7.500 5.500 7.500-5.500" fill="none" stroke="#3a7a30" stroke-width="1.400"/></svg><div class="a" style="left:28px;top:5px;font-size:12px;line-height:18px;color:#000;font-family:'Liberation Sans',sans-serif">CPU-Z</div><div class="capb" style="left:306px;width:103px;height:19px;border-color:#b0b4b8"><div class="a" style="left:0;top:0;width:54px;height:19px;background:linear-gradient(#9a9ea4 0,#6c7076 45%,#3c3e42 50%,#54585e 100%)"></div><div class="a" style="left:55px;top:0;width:48px;height:19px;background:linear-gradient(#e8a090 0,#d86a58 45%,#c03018 50%,#d04828 100%)"></div><i style="left:27px;background:#b0b4b8"></i><i style="left:54px;background:#b0b4b8"></i><svg class="a" style="left:0;top:0" width="103" height="19"><rect x="9" y="10" width="10" height="3" fill="#fff"/><rect x="36.500" y="6.500" width="8" height="5" fill="none" stroke="#9a9ea4" stroke-width="1.600"/><path d="M74 5l8 8M82 5l-8 8" stroke="#fff" stroke-width="2.600"/></svg></div><div class="cliB" style="left:5px;top:27px;width:405px;height:367px"></div><div class="cliB2" style="left:6px;top:28px;width:403px;height:365px"></div><div class="cli" style="width:401px;height:363px"><div class="a" style="left:4px;top:23px;width:394px;height:313px;border:1px solid;border-color:#fff #696969 #696969 #fff;box-shadow:inset -1px -1px 0 #a0a0a0"></div><div class="ctab" style="left:6px;top:6px;width:40px;height:18px">CPU</div><div class="ctab" style="left:48px;top:6px;width:44px;height:18px">Caches</div><div class="ctab" style="left:158px;top:6px;width:47px;height:18px">Memory</div><div class="ctab" style="left:207px;top:6px;width:40px;height:18px">SPD</div><div class="ctab" style="left:249px;top:6px;width:51px;height:18px">Graphics</div><div class="ctab" style="left:302px;top:6px;width:41px;height:18px">About</div><div class="ctab" style="left:92px;top:4px;width:66px;height:21px;border-bottom:none;padding-left:6px;line-height:16px;z-index:2">Mainboard</div><div class="grp" style="left:9px;top:34px;width:384px;height:116px"></div><div class="gl" style="left:15px;top:28px">Motherboard</div><div class="grp" style="left:9px;top:161px;width:384px;height:72px"></div><div class="gl" style="left:15px;top:155px">BIOS</div><div class="grp" style="left:9px;top:242px;width:384px;height:70px"></div><div class="gl" style="left:15px;top:236px">Graphic Interface</div><div class="l" style="left:-11px;top:48px;width:90px;color:#000">Manufacturer</div><div class="f" style="left:86px;top:46px;width:296px">Gigabyte Technology Co., Ltd.</div><div class="l" style="left:-11px;top:66px;width:90px;color:#000">Model</div><div class="f" style="left:86px;top:63px;width:189px">X58A-UD7</div><div class="f c" style="left:277px;top:63px;width:105px">x.x</div><div class="l" style="left:-11px;top:88px;width:90px;color:#000">Chipset</div><div class="f c" style="left:86px;top:86px;width:69px">Intel</div><div class="f c" style="left:157px;top:86px;width:156px">X58</div><div class="l" style="left:252px;top:88px;width:90px;color:#000">Rev.</div><div class="f c" style="left:346px;top:86px;width:36px">13</div><div class="l" style="left:-11px;top:106px;width:90px;color:#000">Southbridge</div><div class="f c" style="left:86px;top:104px;width:69px">Intel</div><div class="f c" style="left:157px;top:104px;width:156px">82801JR (ICH10R)</div><div class="l" style="left:-11px;top:127px;width:90px;color:#000">LPCIO</div><div class="f c" style="left:86px;top:125px;width:69px">ITE</div><div class="f c" style="left:157px;top:125px;width:156px">IT8720</div><div class="l" style="left:-11px;top:174px;width:90px;color:#000">Brand</div><div class="f" style="left:86px;top:172px;width:296px">Award Software International, Inc.</div><div class="l" style="left:-11px;top:192px;width:90px;color:#000">Version</div><div class="f" style="left:86px;top:190px;width:296px">F3b</div><div class="l" style="left:-11px;top:210px;width:90px;color:#000">Date</div><div class="f" style="left:86px;top:208px;width:296px">12/02/2009</div><div class="l" style="left:28px;top:254px;width:90px;color:#000">Version</div><div class="f c" style="left:127px;top:252px;width:254px">PCI-Express</div><div class="l" style="left:28px;top:272px;width:90px;color:#000">Link Width</div><div class="f c" style="left:127px;top:269px;width:84px">x16</div><div class="l" style="left:205px;top:272px;width:90px;color:#000">Max. Supported</div><div class="f c" style="left:301px;top:269px;width:80px">x16</div><div class="l" style="left:28px;top:290px;width:90px;color:#a0a0a0">Side Band</div><div class="f c" style="left:127px;top:287px;width:84px"></div><div class="a" style="left:8px;top:339px;font-size:20px;line-height:26px;font-weight:bold;font-style:italic;color:#9c9c9c;letter-spacing:-.3px">CPU-Z</div><div class="a" style="left:80px;top:347px;color:#000">Version 1.52.6</div><div class="cbtn" style="left:242px;top:341px;width:76px;height:21px;color:#a0a0a0;text-shadow:1px 1px 0 #fff">Validate</div><div class="a" style="left:322px;top:341px;width:77px;height:21px;border:1px solid #000"></div><div class="cbtn" style="left:323px;top:342px;width:75px;height:19px;line-height:16px">OK</div></div></div></body></html>
